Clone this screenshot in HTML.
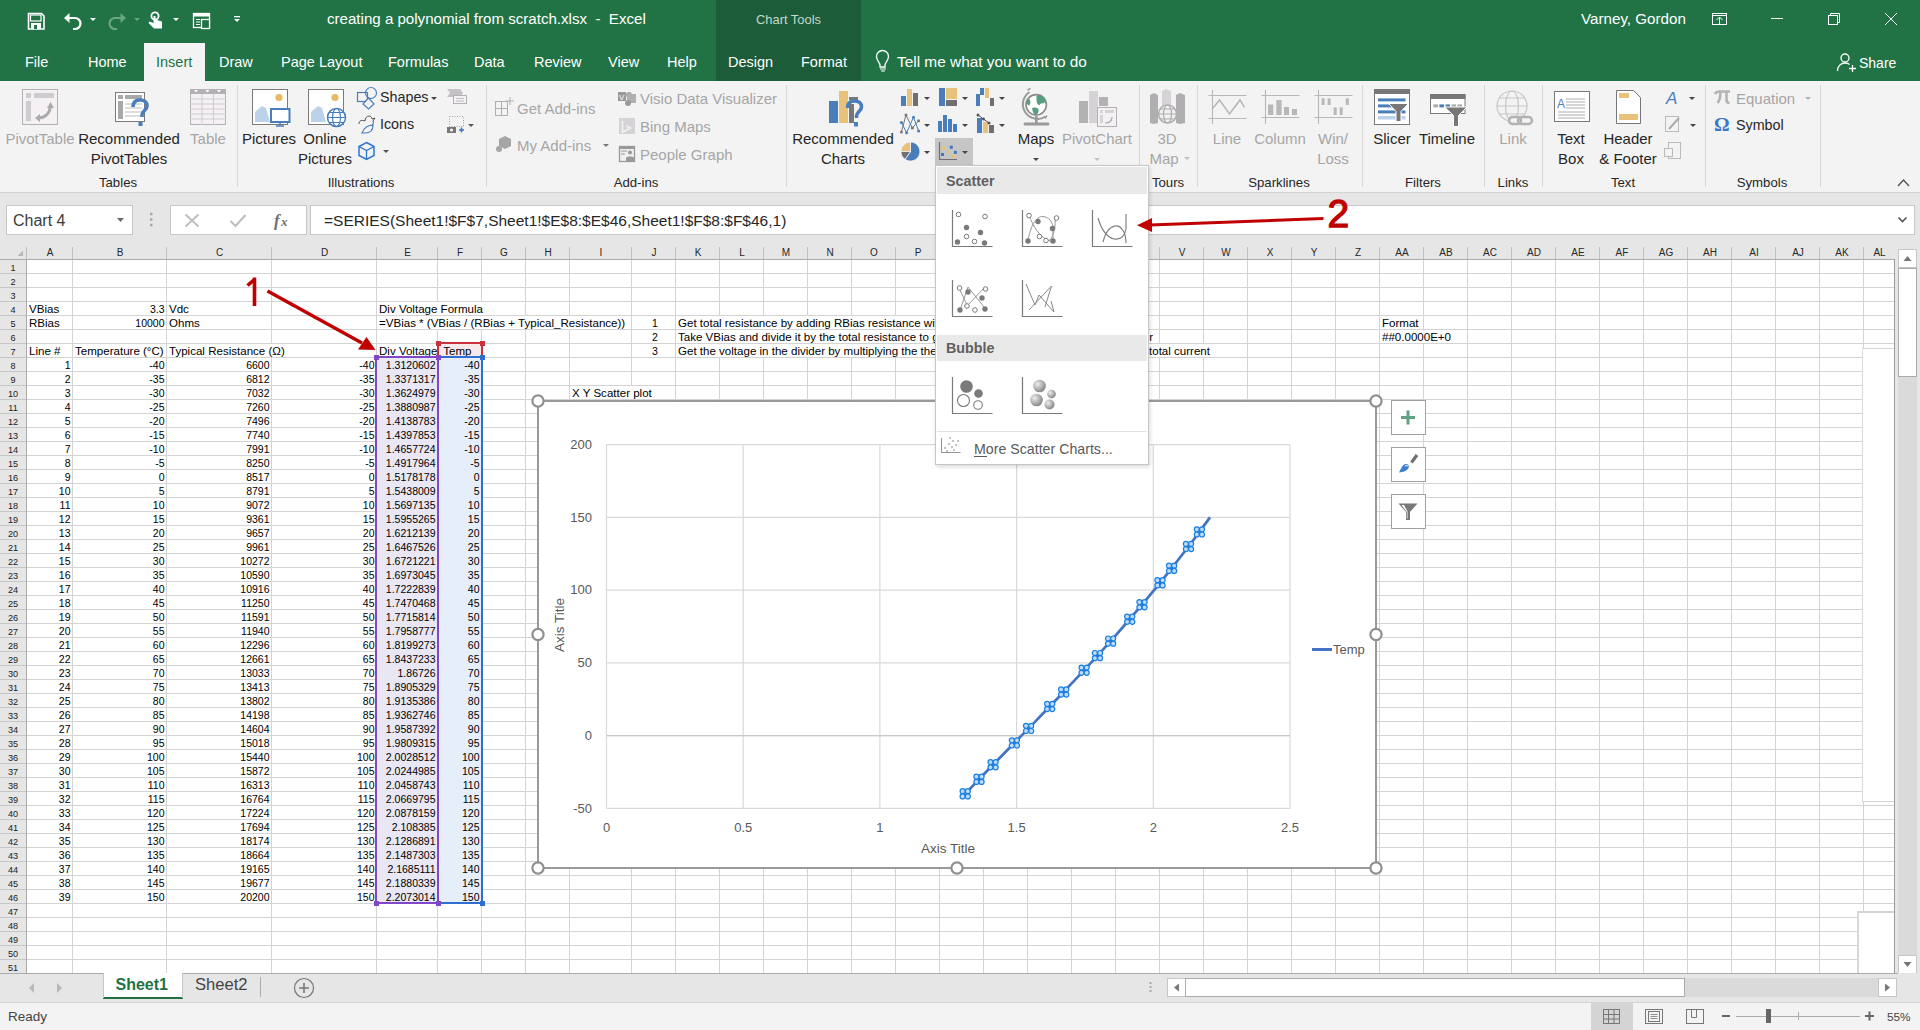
<!DOCTYPE html><html><head><meta charset="utf-8"><style>
*{margin:0;padding:0;box-sizing:border-box}
html,body{width:1920px;height:1030px;overflow:hidden;background:#fff;font-family:"Liberation Sans", sans-serif}
.a{position:absolute}
.t{position:absolute;white-space:nowrap;line-height:1}
.rb{color:#262626;font-size:14.5px}
.dis{color:#a6a6a6}
.gl{color:#262626;font-size:13px}
.cell{position:absolute;white-space:nowrap;font-size:11.55px;line-height:14px;color:#000;padding-top:1px}
.num{font-size:10.5px}
.tab{position:absolute;top:53px;color:#fff;font-size:14.5px;line-height:18px;white-space:nowrap}
</style></head><body>

<div class="a" style="left:0;top:0;width:1920px;height:81px;background:#217346"></div>
<div class="a" style="left:716px;top:0;width:145px;height:81px;background:#1c5c38"></div>
<div class="a" style="left:144px;top:43px;width:61px;height:39px;background:#f3f3f3"></div>
<div class="t" style="left:327px;top:11px;color:#fff;font-size:15.1px">creating a polynomial from scratch.xlsx&nbsp; -&nbsp; Excel</div>
<div class="t" style="left:756px;top:14px;color:#c5d9cc;font-size:12.9px">Chart Tools</div>
<div class="t" style="left:1581px;top:11px;color:#fff;font-size:15.2px">Varney, Gordon</div>
<div class="tab" style="left:25px;color:#fff">File</div>
<div class="tab" style="left:88px;color:#fff">Home</div>
<div class="tab" style="left:156px;color:#217346">Insert</div>
<div class="tab" style="left:219px;color:#fff">Draw</div>
<div class="tab" style="left:281px;color:#fff">Page Layout</div>
<div class="tab" style="left:388px;color:#fff">Formulas</div>
<div class="tab" style="left:474px;color:#fff">Data</div>
<div class="tab" style="left:534px;color:#fff">Review</div>
<div class="tab" style="left:608px;color:#fff">View</div>
<div class="tab" style="left:667px;color:#fff">Help</div>
<div class="tab" style="left:728px;color:#fff">Design</div>
<div class="tab" style="left:801px;color:#fff">Format</div>
<div class="tab" style="left:897px;font-size:15.4px">Tell me what you want to do</div>
<div class="tab" style="left:1859px;top:54px;font-size:14px">Share</div>
<div class="a" style="left:0;top:81px;width:1920px;height:112px;background:#f3f3f3;border-bottom:1px solid #d4d4d4"></div>
<svg class="a" style="left:0;top:0" width="1920" height="195" font-family=""Liberation Sans", sans-serif"><path d="M28.5,13.5 h13 l2.5,2.5 v13 h-15.5 z" fill="none" stroke="#fff" stroke-width="1.6"/><rect x="30.5" y="15" width="10.5" height="6" fill="#217346" stroke="#fff" stroke-width="1.2"/><rect x="31" y="23" width="10" height="6" fill="#fff"/><rect x="34" y="25" width="3" height="4" fill="#217346"/><path d="M66,18 h9 a5.5,5.5 0 0 1 0,11 h-2" fill="none" stroke="#fff" stroke-width="2.2"/><polygon points="64,18 69.5,13 69.5,23" fill="#fff"/><polygon points="90,18 96,18 93.0,21" fill="#fff"/><path d="M124,18 h-9 a5.5,5.5 0 0 0 0,11 h2" fill="none" stroke="#6aa584" stroke-width="2.2"/><polygon points="126,18 120.5,13 120.5,23" fill="#6aa584"/><polygon points="134,18 140,18 137.0,21" fill="#6aa584"/><circle cx="155" cy="16" r="3.6" fill="none" stroke="#fff" stroke-width="1.8"/><path d="M153.5,16 v7 l-4,-1.5 l-1,1.5 l5.5,5.5 h8 v-7 l-6.5,-2 v-3.5 z" fill="#fff"/><polygon points="173,18 179,18 176.0,21" fill="#fff"/><rect x="193.5" y="13.5" width="16" height="14" fill="none" stroke="#fff" stroke-width="1.3"/><rect x="193.5" y="13.5" width="16" height="3" fill="#fff"/><path d="M196,19.5 h4 M196,22 h4 M196,24.5 h4" stroke="#fff" stroke-width="1"/><rect x="201.5" y="19.5" width="8" height="9" fill="#217346" stroke="#fff" stroke-width="1.3"/><rect x="234" y="16" width="6" height="1.3" fill="#fff"/><polygon points="234,19 240,19 237.0,22" fill="#fff"/><rect x="1712.5" y="13.5" width="14" height="11" fill="none" stroke="#fff" stroke-width="1"/><path d="M1712.5,15.5 h14 M1719.5,17 v7.5 M1716.5,20 l3,-3 l3,3" fill="none" stroke="#fff" stroke-width="1"/><rect x="1771" y="18" width="12" height="1" fill="#fff"/><rect x="1828.5" y="15.5" width="9" height="9" fill="none" stroke="#fff" stroke-width="1"/><path d="M1830.5,15.5 v-2 h9 v9 h-2" fill="none" stroke="#fff" stroke-width="1"/><path d="M1885,13 l12,12 M1897,13 l-12,12" stroke="#fff" stroke-width="1"/><path d="M880,67 v-2 c0,-2.5 -3.5,-4.5 -3.5,-8.5 a6,6 0 0 1 12,0 c0,4 -3.5,6 -3.5,8.5 v2 z" fill="none" stroke="#fff" stroke-width="1.3"/><path d="M880,69 h6 M881,71 h4" stroke="#fff" stroke-width="1.2"/><circle cx="1845" cy="58" r="4" fill="none" stroke="#fff" stroke-width="1.3"/><path d="M1837.5,71 c0,-5 3.5,-8 7.5,-8 c2,0 3.5,0.5 4.5,1.5" fill="none" stroke="#fff" stroke-width="1.3"/><path d="M1852.5,65 v7 M1849,68.5 h7" stroke="#fff" stroke-width="1.3"/><rect x="237" y="85" width="1" height="102" fill="#d6d6d6"/><rect x="486" y="85" width="1" height="102" fill="#d6d6d6"/><rect x="786" y="85" width="1" height="102" fill="#d6d6d6"/><rect x="1139" y="85" width="1" height="102" fill="#d6d6d6"/><rect x="1197" y="85" width="1" height="102" fill="#d6d6d6"/><rect x="1362" y="85" width="1" height="102" fill="#d6d6d6"/><rect x="1484" y="85" width="1" height="102" fill="#d6d6d6"/><rect x="1542" y="85" width="1" height="102" fill="#d6d6d6"/><rect x="1705" y="85" width="1" height="102" fill="#d6d6d6"/><rect x="1820" y="85" width="1" height="102" fill="#d6d6d6"/><text x="118" y="187" font-size="13.2" fill="#262626" text-anchor="middle" font-weight="normal" >Tables</text><text x="361" y="187" font-size="13.2" fill="#262626" text-anchor="middle" font-weight="normal" >Illustrations</text><text x="636" y="187" font-size="13.2" fill="#262626" text-anchor="middle" font-weight="normal" >Add-ins</text><text x="1168" y="187" font-size="13.2" fill="#262626" text-anchor="middle" font-weight="normal" >Tours</text><text x="1279" y="187" font-size="13.2" fill="#262626" text-anchor="middle" font-weight="normal" >Sparklines</text><text x="1423" y="187" font-size="13.2" fill="#262626" text-anchor="middle" font-weight="normal" >Filters</text><text x="1513" y="187" font-size="13.2" fill="#262626" text-anchor="middle" font-weight="normal" >Links</text><text x="1623" y="187" font-size="13.2" fill="#262626" text-anchor="middle" font-weight="normal" >Text</text><text x="1762" y="187" font-size="13.2" fill="#262626" text-anchor="middle" font-weight="normal" >Symbols</text><path d="M1898,186 l5.5,-6 l5.5,6" fill="none" stroke="#555" stroke-width="1.4"/><rect x="22.5" y="89.5" width="35" height="35" fill="#f4f0f4" stroke="#b4b1b4" stroke-width="1"/><rect x="26" y="93" width="5" height="5" fill="#cfcccf"/><rect x="34" y="93" width="20" height="5" fill="#cfcccf"/><rect x="26" y="101" width="5" height="20" fill="#cfcccf"/><path d="M38,118 c6,0 12,-4 12,-11" fill="none" stroke="#aaa" stroke-width="3"/><polygon points="47,108 50.5,102 54,108" fill="#aaa"/><polygon points="40,114 35,118 40,122" fill="#aaa"/><text x="40" y="144" font-size="15" fill="#a6a6a6" text-anchor="middle" font-weight="normal" >PivotTable</text><rect x="115.5" y="92.5" width="29" height="29" fill="#fff" stroke="#7a7a7a" stroke-width="1"/><rect x="118" y="95" width="5" height="4" fill="#a8a8a8"/><rect x="125" y="95" width="17" height="4" fill="#a8a8a8"/><rect x="118" y="101" width="5" height="18" fill="#a8a8a8"/><path d="M125,104 h17 M125,108 h17 M125,112 h17 M125,116 h17" stroke="#ddd" stroke-width="2"/><path d="M133,107 c0,-5 3,-7 7,-7 c4,0 7,2 7,6 c0,4 -5,5 -5,9 v2" fill="none" stroke="#4a7ebb" stroke-width="3.6"/><rect x="138.5" y="122" width="4" height="4" fill="#4a7ebb"/><text x="129" y="144" font-size="15" fill="#262626" text-anchor="middle" font-weight="normal" >Recommended</text><text x="129" y="164" font-size="15" fill="#262626" text-anchor="middle" font-weight="normal" >PivotTables</text><rect x="190.5" y="89.5" width="35" height="35" fill="#f4f0f4" stroke="#b4b1b4" stroke-width="1"/><rect x="190" y="89" width="36" height="5" fill="#b4b1b4"/><path d="M190,99 h36 M190,104 h36 M190,109 h36 M190,114 h36 M190,119 h36 M202,94 v31 M213.5,94 v31" stroke="#cfcccf" stroke-width="1"/><polygon points="194,90 198,90 196,92.5" fill="#fff"/><polygon points="205.5,90 209.5,90 207.5,92.5" fill="#fff"/><polygon points="217,90 221,90 219,92.5" fill="#fff"/><text x="208" y="144" font-size="15" fill="#a6a6a6" text-anchor="middle" font-weight="normal" >Table</text><rect x="252.5" y="89.5" width="35" height="35" fill="#fff" stroke="#7a7a7a" stroke-width="1"/><circle cx="279" cy="97.5" r="3.6" fill="#e8b964"/><polygon points="255,122 255,112 262,106 266,108 270,122" fill="#bcd2ea"/><rect x="271" y="109" width="18.5" height="13" fill="#fff" stroke="#4a7ebb" stroke-width="2"/><path d="M280,122 v3 M276,126 h8" stroke="#4a7ebb" stroke-width="1.5"/><text x="269" y="144" font-size="15" fill="#262626" text-anchor="middle" font-weight="normal" >Pictures</text><rect x="308.5" y="89.5" width="35" height="35" fill="#fff" stroke="#7a7a7a" stroke-width="1"/><circle cx="335" cy="97.5" r="3.6" fill="#e8b964"/><polygon points="311,122 311,112 318,106 322,108 326,122" fill="#bcd2ea"/><circle cx="336.5" cy="117.5" r="9" fill="#fff" stroke="#4a7ebb" stroke-width="1.5"/><ellipse cx="336.5" cy="117.5" rx="4" ry="9" fill="none" stroke="#4a7ebb" stroke-width="1.2"/><path d="M327.5,117.5 h18 M329,112.5 h15 M329,122.5 h15" stroke="#4a7ebb" stroke-width="1.2"/><text x="325" y="144" font-size="15" fill="#262626" text-anchor="middle" font-weight="normal" >Online</text><text x="325" y="164" font-size="15" fill="#262626" text-anchor="middle" font-weight="normal" >Pictures</text><rect x="357.5" y="92.5" width="10" height="9" fill="none" stroke="#4a7ebb" stroke-width="1.2"/><circle cx="371" cy="93" r="5.5" fill="none" stroke="#4a7ebb" stroke-width="1.2"/><polygon points="368.5,98 374,104 368.5,109 363,104" fill="#f3f3f3" stroke="#4a7ebb" stroke-width="1.2"/><text x="380" y="102" font-size="14.3" fill="#262626" text-anchor="start" font-weight="normal" >Shapes</text><polygon points="431,97 437,97 434.0,100" fill="#444"/><path d="M359,124 c0,-4 3,-4 6,-3 c0,-3 2,-5 4,-5 c2,0 3,2 3,3 l3,-1 l-2,3 c1,2 0,4 -2,5" fill="none" stroke="#555" stroke-width="1"/><path d="M362,133 c2,-5 6,-8 11,-8 c0,5 -3,8 -8,8 z" fill="none" stroke="#4a7ebb" stroke-width="1.2"/><text x="380" y="129" font-size="14.3" fill="#262626" text-anchor="start" font-weight="normal" >Icons</text><polygon points="366.5,142.5 374,146.5 374,155.5 366.5,159.5 359,155.5 359,146.5" fill="none" stroke="#2e75d0" stroke-width="1.5"/><path d="M359,146.5 l7.5,4 l7.5,-4 M366.5,150.5 v9" fill="none" stroke="#2e75d0" stroke-width="1.3"/><polygon points="383,150 389,150 386.0,153" fill="#555"/><polygon points="447,89 460,89 463,93 460,97 447,97 450,93" fill="#c5c2c5"/><rect x="453.5" y="95.5" width="13" height="8" fill="#f4f0f4" stroke="#b4b1b4"/><path d="M456,98.5 h8 M456,101 h8" stroke="#b4b1b4" stroke-width="0.8"/><rect x="449.5" y="116.5" width="14" height="10" fill="none" stroke="#888" stroke-width="0.8" stroke-dasharray="1,1.5"/><rect x="447" y="127" width="9" height="6" fill="#777"/><circle cx="451.5" cy="130" r="1.6" fill="#f3f3f3"/><path d="M459,130 h5 M461.5,127.5 v5" stroke="#2e75d0" stroke-width="1.5"/><polygon points="468,124 474,124 471.0,127" fill="#555"/><rect x="495.5" y="101.5" width="12" height="14" fill="none" stroke="#b0b0b0" stroke-width="1"/><path d="M495.5,108.5 h12 M501.5,101.5 v14 M510,97 v8 M506,101 h8" stroke="#b0b0b0" stroke-width="1"/><text x="517" y="114" font-size="15" fill="#a6a6a6" text-anchor="start" font-weight="normal" >Get Add-ins</text><polygon points="505,136 511,139 511,146 505,149 499,146 499,139" fill="#a5a5a5"/><circle cx="499" cy="149" r="3" fill="#a5a5a5"/><text x="517" y="151" font-size="15" fill="#a6a6a6" text-anchor="start" font-weight="normal" >My Add-ins</text><polygon points="603,144 609,144 606.0,147" fill="#777"/><rect x="618" y="92" width="8" height="9" fill="#9a9a9a"/><circle cx="629" cy="95" r="3" fill="#a8a8a8"/><rect x="627" y="94" width="9" height="9" fill="#b0b0b0"/><circle cx="628" cy="103" r="3" fill="#9a9a9a"/><text x="619" y="100" font-size="8" fill="#fff">V</text><text x="640" y="104" font-size="15" fill="#a6a6a6" text-anchor="start" font-weight="normal" >Visio Data Visualizer</text><rect x="619" y="118" width="16" height="16" fill="#d6d3d6"/><path d="M622.5,121 v11 l8,-4 l-4,-2" fill="none" stroke="#f0f0f0" stroke-width="1.8"/><text x="640" y="132" font-size="15" fill="#a6a6a6" text-anchor="start" font-weight="normal" >Bing Maps</text><rect x="619.5" y="146.5" width="15" height="15" fill="#f0f0f0" stroke="#9a9a9a" stroke-width="1.3"/><rect x="619" y="146" width="16" height="3" fill="#9a9a9a"/><path d="M621,151 h6 M621,154 h4" stroke="#9a9a9a" stroke-width="1.2"/><circle cx="630" cy="152.5" r="2" fill="#9a9a9a"/><path d="M626,162 v-4 c0,-2 8,-2 8,0 v4" fill="#9a9a9a"/><text x="640" y="160" font-size="15" fill="#a6a6a6" text-anchor="start" font-weight="normal" >People Graph</text><rect x="829" y="101" width="9" height="22" fill="#4a7ebb"/><rect x="839" y="91" width="9" height="32" fill="#e8c27a"/><rect x="849" y="97" width="9" height="3" fill="#777"/><rect x="849" y="104" width="5" height="19" fill="#777"/><path d="M847.5,108 c0,-5 3,-7 7,-7 c4,0 7,2 7,6 c0,4 -5,5 -5,9 v2" fill="none" stroke="#4a7ebb" stroke-width="3.6"/><rect x="854" y="122" width="4" height="4.5" fill="#4a7ebb"/><text x="843" y="144" font-size="15" fill="#262626" text-anchor="middle" font-weight="normal" >Recommended</text><text x="843" y="164" font-size="15" fill="#262626" text-anchor="middle" font-weight="normal" >Charts</text><rect x="901" y="96" width="5" height="10" fill="#4a7ebb"/><rect x="907" y="89" width="5" height="17" fill="#e8c27a"/><rect x="913" y="93" width="5" height="13" fill="#6f6f6f"/><polygon points="924,97 930,97 927.0,100" fill="#444"/><rect x="939" y="88" width="6" height="18" fill="#4a7ebb"/><rect x="946" y="88" width="11" height="11" fill="#e8c27a"/><rect x="946" y="100" width="11" height="6" fill="#6f6f6f"/><polygon points="962,97 968,97 965.0,100" fill="#444"/><rect x="976" y="94" width="4" height="12" fill="#4a7ebb"/><rect x="980" y="88" width="4" height="7" fill="#4a7ebb"/><rect x="985" y="88" width="4" height="10" fill="#e8c27a"/><rect x="990" y="98" width="4" height="8" fill="#6f6f6f"/><polygon points="999,97 1005,97 1002.0,100" fill="#444"/><path d="M901.4,132 L906,115 L912.3,128 L918.6,120.7" fill="none" stroke="#777" stroke-width="1"/><path d="M901.4,122.4 L906.6,132.7 L913.5,117.2 L918.6,131" fill="none" stroke="#4a7ebb" stroke-width="1"/><circle cx="901.4" cy="132" r="1.5" fill="#777"/><circle cx="906" cy="115" r="1.5" fill="#777"/><circle cx="912.3" cy="128" r="1.5" fill="#777"/><circle cx="918.6" cy="120.7" r="1.5" fill="#777"/><circle cx="901.4" cy="122.4" r="1.5" fill="#4a7ebb"/><circle cx="906.6" cy="132.7" r="1.5" fill="#4a7ebb"/><circle cx="913.5" cy="117.2" r="1.5" fill="#4a7ebb"/><circle cx="918.6" cy="131" r="1.5" fill="#4a7ebb"/><polygon points="924,124 930,124 927.0,127" fill="#444"/><rect x="938" y="121" width="4" height="11" fill="#4a7ebb"/><rect x="943" y="115" width="4" height="17" fill="#4a7ebb"/><rect x="948" y="119" width="4" height="13" fill="#4a7ebb"/><rect x="953" y="124" width="4" height="8" fill="#4a7ebb"/><polygon points="962,124 968,124 965.0,127" fill="#444"/><rect x="977" y="118" width="5" height="15" fill="#4a7ebb"/><rect x="983" y="122" width="5" height="11" fill="#e8c27a"/><rect x="989" y="125" width="5" height="8" fill="#6f6f6f"/><path d="M978,115 l11,8" stroke="#555" stroke-width="1"/><circle cx="978" cy="115" r="1.5" fill="#555"/><circle cx="983.5" cy="119" r="1.5" fill="#555"/><circle cx="989" cy="123" r="1.5" fill="#555"/><polygon points="999,124 1005,124 1002.0,127" fill="#444"/><path d="M910.5,151.5 L910.5,142 A9.5,9.5 0 1 1 905,159.3 Z" fill="#4a7ebb" stroke="#f3f3f3" stroke-width="0.8"/><path d="M910.5,151.5 L901,151.5 A9.5,9.5 0 0 1 910.5,142 Z" fill="#e8c27a" stroke="#f3f3f3" stroke-width="0.8"/><path d="M910.5,151.5 L905,159.3 A9.5,9.5 0 0 1 901,151.5 Z" fill="#6f6f6f" stroke="#f3f3f3" stroke-width="0.8"/><polygon points="924,151 930,151 927.0,154" fill="#444"/><rect x="935" y="138" width="38" height="28" fill="#c6c6c6"/><path d="M939.5,142 v17.5 h17.5" fill="none" stroke="#6f6f6f" stroke-width="1.2"/><rect x="942.0" y="146.9" width="3" height="3" fill="#e8c27a"/><rect x="949.8" y="145.8" width="3" height="3" fill="#3f78c0"/><rect x="941.0" y="153.0" width="3" height="3" fill="#3f78c0"/><rect x="946.9" y="150.9" width="3" height="3" fill="#e8c27a"/><rect x="953.9" y="150.9" width="3" height="3" fill="#3f78c0"/><rect x="951.9" y="155.0" width="3" height="3" fill="#e8c27a"/><polygon points="962,151 968,151 965.0,154" fill="#444"/><path d="M1029.5,92 A13,13 0 0 0 1045.5,116.5" fill="none" stroke="#9a9a9a" stroke-width="2"/><path d="M1027.5,90 l3,-1.5 M1045,118.5 l2,-3" stroke="#9a9a9a" stroke-width="1.5"/><circle cx="1036.2" cy="104.8" r="10.2" fill="#fff" stroke="#8a8a8a" stroke-width="1.6"/><path d="M1036.5,96 c3,-1.5 6.5,-0.5 8.5,2.5 c0.5,2 0,4 -1.5,5 c-2,-0.5 -3.5,0.5 -4,2 c-2,-1 -3,-3 -3,-5 z M1026.5,102 c1,-2 2.5,-3 3.5,-2.5 c0.5,2 0.5,4 -0.5,6 c-1.5,0 -2.5,-1 -3,-3.5 z M1032,108 c2,-1 5,-0.5 6.5,1 c0.5,2.5 -0.5,5 -3,6.5 c-1.5,-1 -3,-3.5 -3.5,-7.5 z" fill="#5a9c80"/><rect x="1035" y="116" width="2.6" height="7" fill="#9a9a9a"/><rect x="1023.5" y="122.5" width="26" height="3" rx="1.5" fill="#9a9a9a"/><text x="1036" y="144" font-size="15" fill="#262626" text-anchor="middle" font-weight="normal" >Maps</text><polygon points="1033,158 1039,158 1036.0,161" fill="#444"/><rect x="1079" y="101" width="9" height="22" fill="#b4b1b4"/><rect x="1089" y="91" width="9" height="32" fill="#d6d3d6"/><rect x="1099" y="97" width="9" height="9" fill="#b4b1b4"/><rect x="1097.5" y="107.5" width="19" height="19" fill="#f4f0f4" stroke="#b4b1b4" stroke-width="1"/><rect x="1100" y="110" width="3" height="3" fill="#d6d3d6"/><rect x="1105" y="110" width="9" height="3" fill="#d6d3d6"/><rect x="1100" y="115" width="3" height="8" fill="#d6d3d6"/><path d="M1105,123 c4,0 7,-2 7,-6" fill="none" stroke="#aaa" stroke-width="1.2"/><text x="1097" y="144" font-size="15" fill="#a6a6a6" text-anchor="middle" font-weight="normal" >PivotChart</text><polygon points="1094,158 1100,158 1097.0,161" fill="#c0c0c0"/><path d="M1150,95 l4,-2 l4,2 v28 l-4,1 l-4,-1 z M1176,95 l4,-2 l5,2 v28 l-5,1 l-4,-1 z" fill="#b0aeb0"/><path d="M1162,91 l4,-2 l5,2 v22 h-9 z" fill="#d6d3d6"/><circle cx="1167.5" cy="114" r="9" fill="#f0f0f0" stroke="#b0aeb0" stroke-width="1.5"/><ellipse cx="1167.5" cy="114" rx="4" ry="9" fill="none" stroke="#b0aeb0" stroke-width="1.2"/><path d="M1158.5,114 h18 M1160,109 h15 M1160,119 h15" stroke="#b0aeb0" stroke-width="1.2"/><text x="1167" y="144" font-size="15" fill="#a6a6a6" text-anchor="middle" font-weight="normal" >3D</text><text x="1164" y="164" font-size="15" fill="#a6a6a6" text-anchor="middle" font-weight="normal" >Map</text><polygon points="1184,157 1190,157 1187.0,160" fill="#c0c0c0"/><path d="M1212.5,90 v34 M1208.5,95.5 h38 M1208.5,118.5 h38" stroke="#b9b7b9" stroke-width="1.1" fill="none"/><path d="M1212,109 L1219.6,100 L1229.5,114 L1240,100 L1244.6,107.4" fill="none" stroke="#b9b7b9" stroke-width="1.6"/><text x="1227" y="144" font-size="15" fill="#a6a6a6" text-anchor="middle" font-weight="normal" >Line</text><path d="M1265.5,90 v34 M1261.5,95.5 h38 M1261.5,117.5 h38" stroke="#b9b7b9" stroke-width="1.1" fill="none"/><rect x="1268" y="104.5" width="5.3" height="10.5" fill="#b9b7b9"/><rect x="1276.3" y="100" width="5.3" height="15" fill="#b9b7b9"/><rect x="1284" y="107" width="5" height="8" fill="#b9b7b9"/><rect x="1292" y="109" width="5" height="6" fill="#b9b7b9"/><text x="1280" y="144" font-size="15" fill="#a6a6a6" text-anchor="middle" font-weight="normal" >Column</text><path d="M1318.5,90 v34 M1314.5,95.5 h38 M1314.5,117.5 h38" stroke="#b9b7b9" stroke-width="1.1" fill="none"/><rect x="1321.6" y="98.3" width="3" height="6.7" fill="#b9b7b9"/><rect x="1327.6" y="98.3" width="3" height="6.7" fill="#b9b7b9"/><rect x="1345.8" y="98.3" width="3" height="6.7" fill="#b9b7b9"/><rect x="1333.7" y="107.4" width="3" height="7.6" fill="#b9b7b9"/><rect x="1339.7" y="107.4" width="3" height="7.6" fill="#b9b7b9"/><text x="1333" y="144" font-size="15" fill="#a6a6a6" text-anchor="middle" font-weight="normal" >Win/</text><text x="1333" y="164" font-size="15" fill="#a6a6a6" text-anchor="middle" font-weight="normal" >Loss</text><rect x="1374.5" y="89.5" width="35" height="35" fill="#fff" stroke="#777" stroke-width="1"/><rect x="1374" y="89" width="36" height="5" fill="#777"/><rect x="1378" y="98.4" width="27.5" height="3" fill="#4a7ebb"/><rect x="1378" y="104.4" width="27.5" height="3" fill="#4a7ebb"/><rect x="1378" y="110.4" width="27.5" height="3" fill="#4a7ebb"/><rect x="1378" y="116" width="27.5" height="3.5" fill="#bcd2ea"/><path d="M1388.5,103.5 h20 l-7.5,8 v10 h-5 v-10 z" fill="#777" stroke="#fff" stroke-width="1"/><text x="1392" y="144" font-size="15" fill="#262626" text-anchor="middle" font-weight="normal" >Slicer</text><rect x="1430.5" y="94.5" width="34.5" height="19" fill="#fff" stroke="#777" stroke-width="1"/><rect x="1430" y="94.5" width="35.5" height="4.5" fill="#777"/><rect x="1433.4" y="104.4" width="4.6" height="3" fill="#aaa"/><rect x="1439.4" y="104.4" width="4.6" height="3" fill="#4a7ebb"/><rect x="1445.5" y="104.4" width="4.5" height="3" fill="#4a7ebb"/><rect x="1451.5" y="104.4" width="4.5" height="3" fill="#aaa"/><rect x="1457.5" y="104.4" width="4.5" height="3" fill="#aaa"/><path d="M1444.5,107 h22.5 l-8.5,8.5 v11 h-5 v-11 z" fill="#777" stroke="#fff" stroke-width="1"/><text x="1447" y="144" font-size="15" fill="#262626" text-anchor="middle" font-weight="normal" >Timeline</text><circle cx="1512" cy="106" r="15" fill="none" stroke="#c9c6c9" stroke-width="1.2"/><ellipse cx="1512" cy="106" rx="6.5" ry="15" fill="none" stroke="#c9c6c9" stroke-width="1.2"/><path d="M1497,106 h30 M1499,98 h26 M1499,114 h26" stroke="#c9c6c9" stroke-width="1.2"/><rect x="1509" y="117" width="12" height="7" rx="3.5" fill="#f3f3f3" stroke="#b4b1b4" stroke-width="2.5"/><rect x="1518" y="117" width="14" height="7" rx="3.5" fill="none" stroke="#b4b1b4" stroke-width="2.5"/><text x="1513" y="144" font-size="15" fill="#a6a6a6" text-anchor="middle" font-weight="normal" >Link</text><rect x="1554.5" y="91.5" width="35" height="30" fill="#fff" stroke="#777" stroke-width="1"/><text x="1557" y="108" font-size="12" fill="#4a7ebb" font-weight="normal">A</text><path d="M1566,99 h19 M1566,102 h19 M1566,105 h19 M1566,108 h19 M1558,112 h27 M1558,115 h27 M1558,118 h27" stroke="#999" stroke-width="0.8"/><text x="1571" y="144" font-size="15" fill="#262626" text-anchor="middle" font-weight="normal" >Text</text><text x="1571" y="164" font-size="15" fill="#262626" text-anchor="middle" font-weight="normal" >Box</text><path d="M1616.5,90.5 h17 l7,7 v26 h-24 z" fill="#fff" stroke="#777" stroke-width="1"/><rect x="1619" y="93" width="10" height="5" fill="#e8c27a"/><rect x="1619" y="114" width="19" height="6" fill="#e8c27a"/><text x="1628" y="144" font-size="15" fill="#262626" text-anchor="middle" font-weight="normal" >Header</text><text x="1628" y="164" font-size="15" fill="#262626" text-anchor="middle" font-weight="normal" >&amp; Footer</text><text x="1666" y="104" font-size="17" font-style="italic" fill="#4a7ebb">A</text><polygon points="1689,97 1695,97 1692.0,100" fill="#444"/><rect x="1665.5" y="116.5" width="13" height="15" fill="#f3f3f3" stroke="#bbb" stroke-width="1"/><path d="M1669,129 l10,-11" stroke="#aaa" stroke-width="2"/><polygon points="1690,124 1696,124 1693.0,127" fill="#444"/><rect x="1668.5" y="142.5" width="12" height="16" fill="#f3f3f3" stroke="#bbb" stroke-width="1"/><rect x="1664.5" y="148.5" width="8" height="8" fill="#f3f3f3" stroke="#bbb" stroke-width="1"/><path d="M1715,94 c1,-2 2.5,-2.5 5,-2.5 h10 M1720.5,92 c0,4 -0.5,8 -3,11 M1726.5,92 v8 c0,2 1,3 3,3" fill="none" stroke="#b4b4b4" stroke-width="2.6"/><text x="1736" y="104" font-size="15" fill="#a6a6a6" text-anchor="start" font-weight="normal" >Equation</text><polygon points="1805,97 1811,97 1808.0,100" fill="#b0b0b0"/><text x="1714" y="131" font-size="19.5" fill="#3a78c8" font-weight="bold" font-family="Liberation Serif">Ω</text><text x="1736" y="130" font-size="14.3" fill="#262626" text-anchor="start" font-weight="normal" >Symbol</text></svg>
<div class="a" style="left:0;top:193px;width:1920px;height:51px;background:#e6e6e6"></div>
<svg class="a" style="left:0;top:193px" width="1920" height="51" font-family=""Liberation Sans", sans-serif"><g transform="translate(0,-193)"><rect x="6.5" y="205.5" width="126" height="29" fill="#fff" stroke="#c6c6c6" stroke-width="1"/><text x="13" y="226" font-size="16" fill="#3b3b3b" text-anchor="start" font-weight="normal" >Chart 4</text><polygon points="117,218 124,218 120.5,222" fill="#6a6a6a"/><rect x="150" y="212.8" width="2.5" height="2.5" fill="#a8a8a8"/><rect x="150" y="218.3" width="2.5" height="2.5" fill="#a8a8a8"/><rect x="150" y="223.8" width="2.5" height="2.5" fill="#a8a8a8"/><rect x="170.5" y="205.5" width="136" height="29" fill="#fff" stroke="#c6c6c6" stroke-width="1"/><path d="M185.5,214.5 l13,12 M198.5,214.5 l-13,12" stroke="#bdbdbd" stroke-width="1.8"/><path d="M230.5,221 l5,5 l10,-11" fill="none" stroke="#bdbdbd" stroke-width="2"/><text x="274" y="226" font-size="17" fill="#707070" font-family="Liberation Serif" font-style="italic" font-weight="bold">f</text><text x="281" y="226" font-size="13" fill="#707070" font-family="Liberation Serif" font-style="italic" font-weight="bold">x</text><rect x="310.5" y="205.5" width="1604" height="29" fill="#fff" stroke="#c6c6c6" stroke-width="1"/><text x="324" y="226" font-size="15.5" fill="#262626" text-anchor="start" font-weight="normal" >=SERIES(Sheet1!$F$7,Sheet1!$E$8:$E$46,Sheet1!$F$8:$F$46,1)</text><path d="M1898.5,217.5 l4,4 l4,-4" fill="none" stroke="#555" stroke-width="1.6"/></g></svg>
<div class="a" style="left:0;top:244px;width:1898px;height:15px;background:#e6e6e6"></div>
<div class="a" style="left:0;top:244px;width:26px;height:729px;background:#e6e6e6"></div>
<div class="a" style="left:26px;top:259px;width:1868px;height:714px;background:#fff"></div>
<svg class="a" style="left:0;top:0" width="1920" height="1030" shape-rendering="crispEdges"><line x1="26" y1="273.5" x2="1894" y2="273.5" stroke="#d4d4d4" stroke-width="1"/><line x1="26" y1="287.5" x2="1894" y2="287.5" stroke="#d4d4d4" stroke-width="1"/><line x1="26" y1="301.5" x2="1894" y2="301.5" stroke="#d4d4d4" stroke-width="1"/><line x1="26" y1="315.5" x2="1894" y2="315.5" stroke="#d4d4d4" stroke-width="1"/><line x1="26" y1="329.5" x2="1894" y2="329.5" stroke="#d4d4d4" stroke-width="1"/><line x1="26" y1="343.5" x2="1894" y2="343.5" stroke="#d4d4d4" stroke-width="1"/><line x1="26" y1="357.5" x2="1894" y2="357.5" stroke="#d4d4d4" stroke-width="1"/><line x1="26" y1="371.5" x2="1894" y2="371.5" stroke="#d4d4d4" stroke-width="1"/><line x1="26" y1="385.5" x2="1894" y2="385.5" stroke="#d4d4d4" stroke-width="1"/><line x1="26" y1="399.5" x2="1894" y2="399.5" stroke="#d4d4d4" stroke-width="1"/><line x1="26" y1="413.5" x2="1894" y2="413.5" stroke="#d4d4d4" stroke-width="1"/><line x1="26" y1="427.5" x2="1894" y2="427.5" stroke="#d4d4d4" stroke-width="1"/><line x1="26" y1="441.5" x2="1894" y2="441.5" stroke="#d4d4d4" stroke-width="1"/><line x1="26" y1="455.5" x2="1894" y2="455.5" stroke="#d4d4d4" stroke-width="1"/><line x1="26" y1="469.5" x2="1894" y2="469.5" stroke="#d4d4d4" stroke-width="1"/><line x1="26" y1="483.5" x2="1894" y2="483.5" stroke="#d4d4d4" stroke-width="1"/><line x1="26" y1="497.5" x2="1894" y2="497.5" stroke="#d4d4d4" stroke-width="1"/><line x1="26" y1="511.5" x2="1894" y2="511.5" stroke="#d4d4d4" stroke-width="1"/><line x1="26" y1="525.5" x2="1894" y2="525.5" stroke="#d4d4d4" stroke-width="1"/><line x1="26" y1="539.5" x2="1894" y2="539.5" stroke="#d4d4d4" stroke-width="1"/><line x1="26" y1="553.5" x2="1894" y2="553.5" stroke="#d4d4d4" stroke-width="1"/><line x1="26" y1="567.5" x2="1894" y2="567.5" stroke="#d4d4d4" stroke-width="1"/><line x1="26" y1="581.5" x2="1894" y2="581.5" stroke="#d4d4d4" stroke-width="1"/><line x1="26" y1="595.5" x2="1894" y2="595.5" stroke="#d4d4d4" stroke-width="1"/><line x1="26" y1="609.5" x2="1894" y2="609.5" stroke="#d4d4d4" stroke-width="1"/><line x1="26" y1="623.5" x2="1894" y2="623.5" stroke="#d4d4d4" stroke-width="1"/><line x1="26" y1="637.5" x2="1894" y2="637.5" stroke="#d4d4d4" stroke-width="1"/><line x1="26" y1="651.5" x2="1894" y2="651.5" stroke="#d4d4d4" stroke-width="1"/><line x1="26" y1="665.5" x2="1894" y2="665.5" stroke="#d4d4d4" stroke-width="1"/><line x1="26" y1="679.5" x2="1894" y2="679.5" stroke="#d4d4d4" stroke-width="1"/><line x1="26" y1="693.5" x2="1894" y2="693.5" stroke="#d4d4d4" stroke-width="1"/><line x1="26" y1="707.5" x2="1894" y2="707.5" stroke="#d4d4d4" stroke-width="1"/><line x1="26" y1="721.5" x2="1894" y2="721.5" stroke="#d4d4d4" stroke-width="1"/><line x1="26" y1="735.5" x2="1894" y2="735.5" stroke="#d4d4d4" stroke-width="1"/><line x1="26" y1="749.5" x2="1894" y2="749.5" stroke="#d4d4d4" stroke-width="1"/><line x1="26" y1="763.5" x2="1894" y2="763.5" stroke="#d4d4d4" stroke-width="1"/><line x1="26" y1="777.5" x2="1894" y2="777.5" stroke="#d4d4d4" stroke-width="1"/><line x1="26" y1="791.5" x2="1894" y2="791.5" stroke="#d4d4d4" stroke-width="1"/><line x1="26" y1="805.5" x2="1894" y2="805.5" stroke="#d4d4d4" stroke-width="1"/><line x1="26" y1="819.5" x2="1894" y2="819.5" stroke="#d4d4d4" stroke-width="1"/><line x1="26" y1="833.5" x2="1894" y2="833.5" stroke="#d4d4d4" stroke-width="1"/><line x1="26" y1="847.5" x2="1894" y2="847.5" stroke="#d4d4d4" stroke-width="1"/><line x1="26" y1="861.5" x2="1894" y2="861.5" stroke="#d4d4d4" stroke-width="1"/><line x1="26" y1="875.5" x2="1894" y2="875.5" stroke="#d4d4d4" stroke-width="1"/><line x1="26" y1="889.5" x2="1894" y2="889.5" stroke="#d4d4d4" stroke-width="1"/><line x1="26" y1="903.5" x2="1894" y2="903.5" stroke="#d4d4d4" stroke-width="1"/><line x1="26" y1="917.5" x2="1894" y2="917.5" stroke="#d4d4d4" stroke-width="1"/><line x1="26" y1="931.5" x2="1894" y2="931.5" stroke="#d4d4d4" stroke-width="1"/><line x1="26" y1="945.5" x2="1894" y2="945.5" stroke="#d4d4d4" stroke-width="1"/><line x1="26" y1="959.5" x2="1894" y2="959.5" stroke="#d4d4d4" stroke-width="1"/><line x1="26" y1="973.5" x2="1894" y2="973.5" stroke="#d4d4d4" stroke-width="1"/><line x1="72.5" y1="259" x2="72.5" y2="973" stroke="#d4d4d4" stroke-width="1"/><line x1="166.5" y1="259" x2="166.5" y2="973" stroke="#d4d4d4" stroke-width="1"/><line x1="271.5" y1="259" x2="271.5" y2="973" stroke="#d4d4d4" stroke-width="1"/><line x1="376.5" y1="259" x2="376.5" y2="973" stroke="#d4d4d4" stroke-width="1"/><line x1="437.5" y1="259" x2="437.5" y2="973" stroke="#d4d4d4" stroke-width="1"/><line x1="481.5" y1="259" x2="481.5" y2="973" stroke="#d4d4d4" stroke-width="1"/><line x1="525.5" y1="259" x2="525.5" y2="973" stroke="#d4d4d4" stroke-width="1"/><line x1="569.5" y1="259" x2="569.5" y2="973" stroke="#d4d4d4" stroke-width="1"/><line x1="631.5" y1="259" x2="631.5" y2="973" stroke="#d4d4d4" stroke-width="1"/><line x1="675.5" y1="259" x2="675.5" y2="973" stroke="#d4d4d4" stroke-width="1"/><line x1="719.5" y1="259" x2="719.5" y2="973" stroke="#d4d4d4" stroke-width="1"/><line x1="763.5" y1="259" x2="763.5" y2="973" stroke="#d4d4d4" stroke-width="1"/><line x1="807.5" y1="259" x2="807.5" y2="973" stroke="#d4d4d4" stroke-width="1"/><line x1="851.5" y1="259" x2="851.5" y2="973" stroke="#d4d4d4" stroke-width="1"/><line x1="895.5" y1="259" x2="895.5" y2="973" stroke="#d4d4d4" stroke-width="1"/><line x1="939.5" y1="259" x2="939.5" y2="973" stroke="#d4d4d4" stroke-width="1"/><line x1="983.5" y1="259" x2="983.5" y2="973" stroke="#d4d4d4" stroke-width="1"/><line x1="1027.5" y1="259" x2="1027.5" y2="973" stroke="#d4d4d4" stroke-width="1"/><line x1="1071.5" y1="259" x2="1071.5" y2="973" stroke="#d4d4d4" stroke-width="1"/><line x1="1115.5" y1="259" x2="1115.5" y2="973" stroke="#d4d4d4" stroke-width="1"/><line x1="1159.5" y1="259" x2="1159.5" y2="973" stroke="#d4d4d4" stroke-width="1"/><line x1="1203.5" y1="259" x2="1203.5" y2="973" stroke="#d4d4d4" stroke-width="1"/><line x1="1247.5" y1="259" x2="1247.5" y2="973" stroke="#d4d4d4" stroke-width="1"/><line x1="1291.5" y1="259" x2="1291.5" y2="973" stroke="#d4d4d4" stroke-width="1"/><line x1="1335.5" y1="259" x2="1335.5" y2="973" stroke="#d4d4d4" stroke-width="1"/><line x1="1379.5" y1="259" x2="1379.5" y2="973" stroke="#d4d4d4" stroke-width="1"/><line x1="1423.5" y1="259" x2="1423.5" y2="973" stroke="#d4d4d4" stroke-width="1"/><line x1="1467.5" y1="259" x2="1467.5" y2="973" stroke="#d4d4d4" stroke-width="1"/><line x1="1511.5" y1="259" x2="1511.5" y2="973" stroke="#d4d4d4" stroke-width="1"/><line x1="1555.5" y1="259" x2="1555.5" y2="973" stroke="#d4d4d4" stroke-width="1"/><line x1="1599.5" y1="259" x2="1599.5" y2="973" stroke="#d4d4d4" stroke-width="1"/><line x1="1643.5" y1="259" x2="1643.5" y2="973" stroke="#d4d4d4" stroke-width="1"/><line x1="1687.5" y1="259" x2="1687.5" y2="973" stroke="#d4d4d4" stroke-width="1"/><line x1="1731.5" y1="259" x2="1731.5" y2="973" stroke="#d4d4d4" stroke-width="1"/><line x1="1775.5" y1="259" x2="1775.5" y2="973" stroke="#d4d4d4" stroke-width="1"/><line x1="1819.5" y1="259" x2="1819.5" y2="973" stroke="#d4d4d4" stroke-width="1"/><line x1="1863.5" y1="259" x2="1863.5" y2="973" stroke="#d4d4d4" stroke-width="1"/><line x1="26.5" y1="247" x2="26.5" y2="259" stroke="#c0c0c0" stroke-width="1"/><line x1="72.5" y1="247" x2="72.5" y2="259" stroke="#c0c0c0" stroke-width="1"/><line x1="166.5" y1="247" x2="166.5" y2="259" stroke="#c0c0c0" stroke-width="1"/><line x1="271.5" y1="247" x2="271.5" y2="259" stroke="#c0c0c0" stroke-width="1"/><line x1="376.5" y1="247" x2="376.5" y2="259" stroke="#c0c0c0" stroke-width="1"/><line x1="437.5" y1="247" x2="437.5" y2="259" stroke="#c0c0c0" stroke-width="1"/><line x1="481.5" y1="247" x2="481.5" y2="259" stroke="#c0c0c0" stroke-width="1"/><line x1="525.5" y1="247" x2="525.5" y2="259" stroke="#c0c0c0" stroke-width="1"/><line x1="569.5" y1="247" x2="569.5" y2="259" stroke="#c0c0c0" stroke-width="1"/><line x1="631.5" y1="247" x2="631.5" y2="259" stroke="#c0c0c0" stroke-width="1"/><line x1="675.5" y1="247" x2="675.5" y2="259" stroke="#c0c0c0" stroke-width="1"/><line x1="719.5" y1="247" x2="719.5" y2="259" stroke="#c0c0c0" stroke-width="1"/><line x1="763.5" y1="247" x2="763.5" y2="259" stroke="#c0c0c0" stroke-width="1"/><line x1="807.5" y1="247" x2="807.5" y2="259" stroke="#c0c0c0" stroke-width="1"/><line x1="851.5" y1="247" x2="851.5" y2="259" stroke="#c0c0c0" stroke-width="1"/><line x1="895.5" y1="247" x2="895.5" y2="259" stroke="#c0c0c0" stroke-width="1"/><line x1="939.5" y1="247" x2="939.5" y2="259" stroke="#c0c0c0" stroke-width="1"/><line x1="983.5" y1="247" x2="983.5" y2="259" stroke="#c0c0c0" stroke-width="1"/><line x1="1027.5" y1="247" x2="1027.5" y2="259" stroke="#c0c0c0" stroke-width="1"/><line x1="1071.5" y1="247" x2="1071.5" y2="259" stroke="#c0c0c0" stroke-width="1"/><line x1="1115.5" y1="247" x2="1115.5" y2="259" stroke="#c0c0c0" stroke-width="1"/><line x1="1159.5" y1="247" x2="1159.5" y2="259" stroke="#c0c0c0" stroke-width="1"/><line x1="1203.5" y1="247" x2="1203.5" y2="259" stroke="#c0c0c0" stroke-width="1"/><line x1="1247.5" y1="247" x2="1247.5" y2="259" stroke="#c0c0c0" stroke-width="1"/><line x1="1291.5" y1="247" x2="1291.5" y2="259" stroke="#c0c0c0" stroke-width="1"/><line x1="1335.5" y1="247" x2="1335.5" y2="259" stroke="#c0c0c0" stroke-width="1"/><line x1="1379.5" y1="247" x2="1379.5" y2="259" stroke="#c0c0c0" stroke-width="1"/><line x1="1423.5" y1="247" x2="1423.5" y2="259" stroke="#c0c0c0" stroke-width="1"/><line x1="1467.5" y1="247" x2="1467.5" y2="259" stroke="#c0c0c0" stroke-width="1"/><line x1="1511.5" y1="247" x2="1511.5" y2="259" stroke="#c0c0c0" stroke-width="1"/><line x1="1555.5" y1="247" x2="1555.5" y2="259" stroke="#c0c0c0" stroke-width="1"/><line x1="1599.5" y1="247" x2="1599.5" y2="259" stroke="#c0c0c0" stroke-width="1"/><line x1="1643.5" y1="247" x2="1643.5" y2="259" stroke="#c0c0c0" stroke-width="1"/><line x1="1687.5" y1="247" x2="1687.5" y2="259" stroke="#c0c0c0" stroke-width="1"/><line x1="1731.5" y1="247" x2="1731.5" y2="259" stroke="#c0c0c0" stroke-width="1"/><line x1="1775.5" y1="247" x2="1775.5" y2="259" stroke="#c0c0c0" stroke-width="1"/><line x1="1819.5" y1="247" x2="1819.5" y2="259" stroke="#c0c0c0" stroke-width="1"/><line x1="1863.5" y1="247" x2="1863.5" y2="259" stroke="#c0c0c0" stroke-width="1"/><line x1="0" y1="259.5" x2="1894" y2="259.5" stroke="#ababab" stroke-width="1"/><line x1="26.5" y1="259" x2="26.5" y2="973" stroke="#ababab" stroke-width="1"/><line x1="0" y1="273.5" x2="26" y2="273.5" stroke="#c6c6c6" stroke-width="1"/><line x1="0" y1="287.5" x2="26" y2="287.5" stroke="#c6c6c6" stroke-width="1"/><line x1="0" y1="301.5" x2="26" y2="301.5" stroke="#c6c6c6" stroke-width="1"/><line x1="0" y1="315.5" x2="26" y2="315.5" stroke="#c6c6c6" stroke-width="1"/><line x1="0" y1="329.5" x2="26" y2="329.5" stroke="#c6c6c6" stroke-width="1"/><line x1="0" y1="343.5" x2="26" y2="343.5" stroke="#c6c6c6" stroke-width="1"/><line x1="0" y1="357.5" x2="26" y2="357.5" stroke="#c6c6c6" stroke-width="1"/><line x1="0" y1="371.5" x2="26" y2="371.5" stroke="#c6c6c6" stroke-width="1"/><line x1="0" y1="385.5" x2="26" y2="385.5" stroke="#c6c6c6" stroke-width="1"/><line x1="0" y1="399.5" x2="26" y2="399.5" stroke="#c6c6c6" stroke-width="1"/><line x1="0" y1="413.5" x2="26" y2="413.5" stroke="#c6c6c6" stroke-width="1"/><line x1="0" y1="427.5" x2="26" y2="427.5" stroke="#c6c6c6" stroke-width="1"/><line x1="0" y1="441.5" x2="26" y2="441.5" stroke="#c6c6c6" stroke-width="1"/><line x1="0" y1="455.5" x2="26" y2="455.5" stroke="#c6c6c6" stroke-width="1"/><line x1="0" y1="469.5" x2="26" y2="469.5" stroke="#c6c6c6" stroke-width="1"/><line x1="0" y1="483.5" x2="26" y2="483.5" stroke="#c6c6c6" stroke-width="1"/><line x1="0" y1="497.5" x2="26" y2="497.5" stroke="#c6c6c6" stroke-width="1"/><line x1="0" y1="511.5" x2="26" y2="511.5" stroke="#c6c6c6" stroke-width="1"/><line x1="0" y1="525.5" x2="26" y2="525.5" stroke="#c6c6c6" stroke-width="1"/><line x1="0" y1="539.5" x2="26" y2="539.5" stroke="#c6c6c6" stroke-width="1"/><line x1="0" y1="553.5" x2="26" y2="553.5" stroke="#c6c6c6" stroke-width="1"/><line x1="0" y1="567.5" x2="26" y2="567.5" stroke="#c6c6c6" stroke-width="1"/><line x1="0" y1="581.5" x2="26" y2="581.5" stroke="#c6c6c6" stroke-width="1"/><line x1="0" y1="595.5" x2="26" y2="595.5" stroke="#c6c6c6" stroke-width="1"/><line x1="0" y1="609.5" x2="26" y2="609.5" stroke="#c6c6c6" stroke-width="1"/><line x1="0" y1="623.5" x2="26" y2="623.5" stroke="#c6c6c6" stroke-width="1"/><line x1="0" y1="637.5" x2="26" y2="637.5" stroke="#c6c6c6" stroke-width="1"/><line x1="0" y1="651.5" x2="26" y2="651.5" stroke="#c6c6c6" stroke-width="1"/><line x1="0" y1="665.5" x2="26" y2="665.5" stroke="#c6c6c6" stroke-width="1"/><line x1="0" y1="679.5" x2="26" y2="679.5" stroke="#c6c6c6" stroke-width="1"/><line x1="0" y1="693.5" x2="26" y2="693.5" stroke="#c6c6c6" stroke-width="1"/><line x1="0" y1="707.5" x2="26" y2="707.5" stroke="#c6c6c6" stroke-width="1"/><line x1="0" y1="721.5" x2="26" y2="721.5" stroke="#c6c6c6" stroke-width="1"/><line x1="0" y1="735.5" x2="26" y2="735.5" stroke="#c6c6c6" stroke-width="1"/><line x1="0" y1="749.5" x2="26" y2="749.5" stroke="#c6c6c6" stroke-width="1"/><line x1="0" y1="763.5" x2="26" y2="763.5" stroke="#c6c6c6" stroke-width="1"/><line x1="0" y1="777.5" x2="26" y2="777.5" stroke="#c6c6c6" stroke-width="1"/><line x1="0" y1="791.5" x2="26" y2="791.5" stroke="#c6c6c6" stroke-width="1"/><line x1="0" y1="805.5" x2="26" y2="805.5" stroke="#c6c6c6" stroke-width="1"/><line x1="0" y1="819.5" x2="26" y2="819.5" stroke="#c6c6c6" stroke-width="1"/><line x1="0" y1="833.5" x2="26" y2="833.5" stroke="#c6c6c6" stroke-width="1"/><line x1="0" y1="847.5" x2="26" y2="847.5" stroke="#c6c6c6" stroke-width="1"/><line x1="0" y1="861.5" x2="26" y2="861.5" stroke="#c6c6c6" stroke-width="1"/><line x1="0" y1="875.5" x2="26" y2="875.5" stroke="#c6c6c6" stroke-width="1"/><line x1="0" y1="889.5" x2="26" y2="889.5" stroke="#c6c6c6" stroke-width="1"/><line x1="0" y1="903.5" x2="26" y2="903.5" stroke="#c6c6c6" stroke-width="1"/><line x1="0" y1="917.5" x2="26" y2="917.5" stroke="#c6c6c6" stroke-width="1"/><line x1="0" y1="931.5" x2="26" y2="931.5" stroke="#c6c6c6" stroke-width="1"/><line x1="0" y1="945.5" x2="26" y2="945.5" stroke="#c6c6c6" stroke-width="1"/><line x1="0" y1="959.5" x2="26" y2="959.5" stroke="#c6c6c6" stroke-width="1"/><line x1="0" y1="973.5" x2="26" y2="973.5" stroke="#c6c6c6" stroke-width="1"/><line x1="1894.5" y1="259" x2="1894.5" y2="973" stroke="#ababab" stroke-width="1"/><polygon points="23,256 23,250 17,256" fill="#b8b8b8"/></svg>
<div class="t" style="left:30.0px;width:40px;text-align:center;top:248px;font-size:10px;color:#262626">A</div>
<div class="t" style="left:100.0px;width:40px;text-align:center;top:248px;font-size:10px;color:#262626">B</div>
<div class="t" style="left:199.5px;width:40px;text-align:center;top:248px;font-size:10px;color:#262626">C</div>
<div class="t" style="left:304.5px;width:40px;text-align:center;top:248px;font-size:10px;color:#262626">D</div>
<div class="t" style="left:387.5px;width:40px;text-align:center;top:248px;font-size:10px;color:#262626">E</div>
<div class="t" style="left:440.0px;width:40px;text-align:center;top:248px;font-size:10px;color:#262626">F</div>
<div class="t" style="left:484.0px;width:40px;text-align:center;top:248px;font-size:10px;color:#262626">G</div>
<div class="t" style="left:528.0px;width:40px;text-align:center;top:248px;font-size:10px;color:#262626">H</div>
<div class="t" style="left:581.0px;width:40px;text-align:center;top:248px;font-size:10px;color:#262626">I</div>
<div class="t" style="left:634.0px;width:40px;text-align:center;top:248px;font-size:10px;color:#262626">J</div>
<div class="t" style="left:678.0px;width:40px;text-align:center;top:248px;font-size:10px;color:#262626">K</div>
<div class="t" style="left:722.0px;width:40px;text-align:center;top:248px;font-size:10px;color:#262626">L</div>
<div class="t" style="left:766.0px;width:40px;text-align:center;top:248px;font-size:10px;color:#262626">M</div>
<div class="t" style="left:810.0px;width:40px;text-align:center;top:248px;font-size:10px;color:#262626">N</div>
<div class="t" style="left:854.0px;width:40px;text-align:center;top:248px;font-size:10px;color:#262626">O</div>
<div class="t" style="left:898.0px;width:40px;text-align:center;top:248px;font-size:10px;color:#262626">P</div>
<div class="t" style="left:942.0px;width:40px;text-align:center;top:248px;font-size:10px;color:#262626">Q</div>
<div class="t" style="left:986.0px;width:40px;text-align:center;top:248px;font-size:10px;color:#262626">R</div>
<div class="t" style="left:1030.0px;width:40px;text-align:center;top:248px;font-size:10px;color:#262626">S</div>
<div class="t" style="left:1074.0px;width:40px;text-align:center;top:248px;font-size:10px;color:#262626">T</div>
<div class="t" style="left:1118.0px;width:40px;text-align:center;top:248px;font-size:10px;color:#262626">U</div>
<div class="t" style="left:1162.0px;width:40px;text-align:center;top:248px;font-size:10px;color:#262626">V</div>
<div class="t" style="left:1206.0px;width:40px;text-align:center;top:248px;font-size:10px;color:#262626">W</div>
<div class="t" style="left:1250.0px;width:40px;text-align:center;top:248px;font-size:10px;color:#262626">X</div>
<div class="t" style="left:1294.0px;width:40px;text-align:center;top:248px;font-size:10px;color:#262626">Y</div>
<div class="t" style="left:1338.0px;width:40px;text-align:center;top:248px;font-size:10px;color:#262626">Z</div>
<div class="t" style="left:1382.0px;width:40px;text-align:center;top:248px;font-size:10px;color:#262626">AA</div>
<div class="t" style="left:1426.0px;width:40px;text-align:center;top:248px;font-size:10px;color:#262626">AB</div>
<div class="t" style="left:1470.0px;width:40px;text-align:center;top:248px;font-size:10px;color:#262626">AC</div>
<div class="t" style="left:1514.0px;width:40px;text-align:center;top:248px;font-size:10px;color:#262626">AD</div>
<div class="t" style="left:1558.0px;width:40px;text-align:center;top:248px;font-size:10px;color:#262626">AE</div>
<div class="t" style="left:1602.0px;width:40px;text-align:center;top:248px;font-size:10px;color:#262626">AF</div>
<div class="t" style="left:1646.0px;width:40px;text-align:center;top:248px;font-size:10px;color:#262626">AG</div>
<div class="t" style="left:1690.0px;width:40px;text-align:center;top:248px;font-size:10px;color:#262626">AH</div>
<div class="t" style="left:1734.0px;width:40px;text-align:center;top:248px;font-size:10px;color:#262626">AI</div>
<div class="t" style="left:1778.0px;width:40px;text-align:center;top:248px;font-size:10px;color:#262626">AJ</div>
<div class="t" style="left:1822.0px;width:40px;text-align:center;top:248px;font-size:10px;color:#262626">AK</div>
<div class="t" style="left:1859.5px;width:40px;text-align:center;top:248px;font-size:10px;color:#262626">AL</div>
<div class="t" style="left:1px;width:24px;text-align:center;top:263px;font-size:9.6px;color:#1a1a1a;transform:scaleX(0.95)">1</div>
<div class="t" style="left:1px;width:24px;text-align:center;top:277px;font-size:9.6px;color:#1a1a1a;transform:scaleX(0.95)">2</div>
<div class="t" style="left:1px;width:24px;text-align:center;top:291px;font-size:9.6px;color:#1a1a1a;transform:scaleX(0.95)">3</div>
<div class="t" style="left:1px;width:24px;text-align:center;top:305px;font-size:9.6px;color:#1a1a1a;transform:scaleX(0.95)">4</div>
<div class="t" style="left:1px;width:24px;text-align:center;top:319px;font-size:9.6px;color:#1a1a1a;transform:scaleX(0.95)">5</div>
<div class="t" style="left:1px;width:24px;text-align:center;top:333px;font-size:9.6px;color:#1a1a1a;transform:scaleX(0.95)">6</div>
<div class="t" style="left:1px;width:24px;text-align:center;top:347px;font-size:9.6px;color:#1a1a1a;transform:scaleX(0.95)">7</div>
<div class="t" style="left:1px;width:24px;text-align:center;top:361px;font-size:9.6px;color:#1a1a1a;transform:scaleX(0.95)">8</div>
<div class="t" style="left:1px;width:24px;text-align:center;top:375px;font-size:9.6px;color:#1a1a1a;transform:scaleX(0.95)">9</div>
<div class="t" style="left:1px;width:24px;text-align:center;top:389px;font-size:9.6px;color:#1a1a1a;transform:scaleX(0.95)">10</div>
<div class="t" style="left:1px;width:24px;text-align:center;top:403px;font-size:9.6px;color:#1a1a1a;transform:scaleX(0.95)">11</div>
<div class="t" style="left:1px;width:24px;text-align:center;top:417px;font-size:9.6px;color:#1a1a1a;transform:scaleX(0.95)">12</div>
<div class="t" style="left:1px;width:24px;text-align:center;top:431px;font-size:9.6px;color:#1a1a1a;transform:scaleX(0.95)">13</div>
<div class="t" style="left:1px;width:24px;text-align:center;top:445px;font-size:9.6px;color:#1a1a1a;transform:scaleX(0.95)">14</div>
<div class="t" style="left:1px;width:24px;text-align:center;top:459px;font-size:9.6px;color:#1a1a1a;transform:scaleX(0.95)">15</div>
<div class="t" style="left:1px;width:24px;text-align:center;top:473px;font-size:9.6px;color:#1a1a1a;transform:scaleX(0.95)">16</div>
<div class="t" style="left:1px;width:24px;text-align:center;top:487px;font-size:9.6px;color:#1a1a1a;transform:scaleX(0.95)">17</div>
<div class="t" style="left:1px;width:24px;text-align:center;top:501px;font-size:9.6px;color:#1a1a1a;transform:scaleX(0.95)">18</div>
<div class="t" style="left:1px;width:24px;text-align:center;top:515px;font-size:9.6px;color:#1a1a1a;transform:scaleX(0.95)">19</div>
<div class="t" style="left:1px;width:24px;text-align:center;top:529px;font-size:9.6px;color:#1a1a1a;transform:scaleX(0.95)">20</div>
<div class="t" style="left:1px;width:24px;text-align:center;top:543px;font-size:9.6px;color:#1a1a1a;transform:scaleX(0.95)">21</div>
<div class="t" style="left:1px;width:24px;text-align:center;top:557px;font-size:9.6px;color:#1a1a1a;transform:scaleX(0.95)">22</div>
<div class="t" style="left:1px;width:24px;text-align:center;top:571px;font-size:9.6px;color:#1a1a1a;transform:scaleX(0.95)">23</div>
<div class="t" style="left:1px;width:24px;text-align:center;top:585px;font-size:9.6px;color:#1a1a1a;transform:scaleX(0.95)">24</div>
<div class="t" style="left:1px;width:24px;text-align:center;top:599px;font-size:9.6px;color:#1a1a1a;transform:scaleX(0.95)">25</div>
<div class="t" style="left:1px;width:24px;text-align:center;top:613px;font-size:9.6px;color:#1a1a1a;transform:scaleX(0.95)">26</div>
<div class="t" style="left:1px;width:24px;text-align:center;top:627px;font-size:9.6px;color:#1a1a1a;transform:scaleX(0.95)">27</div>
<div class="t" style="left:1px;width:24px;text-align:center;top:641px;font-size:9.6px;color:#1a1a1a;transform:scaleX(0.95)">28</div>
<div class="t" style="left:1px;width:24px;text-align:center;top:655px;font-size:9.6px;color:#1a1a1a;transform:scaleX(0.95)">29</div>
<div class="t" style="left:1px;width:24px;text-align:center;top:669px;font-size:9.6px;color:#1a1a1a;transform:scaleX(0.95)">30</div>
<div class="t" style="left:1px;width:24px;text-align:center;top:683px;font-size:9.6px;color:#1a1a1a;transform:scaleX(0.95)">31</div>
<div class="t" style="left:1px;width:24px;text-align:center;top:697px;font-size:9.6px;color:#1a1a1a;transform:scaleX(0.95)">32</div>
<div class="t" style="left:1px;width:24px;text-align:center;top:711px;font-size:9.6px;color:#1a1a1a;transform:scaleX(0.95)">33</div>
<div class="t" style="left:1px;width:24px;text-align:center;top:725px;font-size:9.6px;color:#1a1a1a;transform:scaleX(0.95)">34</div>
<div class="t" style="left:1px;width:24px;text-align:center;top:739px;font-size:9.6px;color:#1a1a1a;transform:scaleX(0.95)">35</div>
<div class="t" style="left:1px;width:24px;text-align:center;top:753px;font-size:9.6px;color:#1a1a1a;transform:scaleX(0.95)">36</div>
<div class="t" style="left:1px;width:24px;text-align:center;top:767px;font-size:9.6px;color:#1a1a1a;transform:scaleX(0.95)">37</div>
<div class="t" style="left:1px;width:24px;text-align:center;top:781px;font-size:9.6px;color:#1a1a1a;transform:scaleX(0.95)">38</div>
<div class="t" style="left:1px;width:24px;text-align:center;top:795px;font-size:9.6px;color:#1a1a1a;transform:scaleX(0.95)">39</div>
<div class="t" style="left:1px;width:24px;text-align:center;top:809px;font-size:9.6px;color:#1a1a1a;transform:scaleX(0.95)">40</div>
<div class="t" style="left:1px;width:24px;text-align:center;top:823px;font-size:9.6px;color:#1a1a1a;transform:scaleX(0.95)">41</div>
<div class="t" style="left:1px;width:24px;text-align:center;top:837px;font-size:9.6px;color:#1a1a1a;transform:scaleX(0.95)">42</div>
<div class="t" style="left:1px;width:24px;text-align:center;top:851px;font-size:9.6px;color:#1a1a1a;transform:scaleX(0.95)">43</div>
<div class="t" style="left:1px;width:24px;text-align:center;top:865px;font-size:9.6px;color:#1a1a1a;transform:scaleX(0.95)">44</div>
<div class="t" style="left:1px;width:24px;text-align:center;top:879px;font-size:9.6px;color:#1a1a1a;transform:scaleX(0.95)">45</div>
<div class="t" style="left:1px;width:24px;text-align:center;top:893px;font-size:9.6px;color:#1a1a1a;transform:scaleX(0.95)">46</div>
<div class="t" style="left:1px;width:24px;text-align:center;top:907px;font-size:9.6px;color:#1a1a1a;transform:scaleX(0.95)">47</div>
<div class="t" style="left:1px;width:24px;text-align:center;top:921px;font-size:9.6px;color:#1a1a1a;transform:scaleX(0.95)">48</div>
<div class="t" style="left:1px;width:24px;text-align:center;top:935px;font-size:9.6px;color:#1a1a1a;transform:scaleX(0.95)">49</div>
<div class="t" style="left:1px;width:24px;text-align:center;top:949px;font-size:9.6px;color:#1a1a1a;transform:scaleX(0.95)">50</div>
<div class="t" style="left:1px;width:24px;text-align:center;top:963px;font-size:9.6px;color:#1a1a1a;transform:scaleX(0.95)">51</div>
<div class="a" style="left:377px;top:357px;width:60px;height:546px;background:#e9e7f3"></div>
<div class="a" style="left:438px;top:357px;width:44px;height:546px;background:#e6eef9"></div>
<div class="a" style="left:438px;top:343px;width:44px;height:14px;background:#f7e9eb"></div>
<div class="a" style="left:377px;top:302px;width:148px;height:13px;background:#fff"></div>
<div class="a" style="left:377px;top:316px;width:254px;height:13px;background:#fff"></div>
<div class="a" style="left:167px;top:344px;width:209px;height:13px;background:#fff"></div>
<div class="a" style="left:570px;top:386px;width:105px;height:13px;background:#fff"></div>
<div class="a" style="left:1380px;top:330px;width:87px;height:13px;background:#fff"></div>
<div class="a" style="left:676px;top:316px;width:472px;height:13px;background:#fff"></div>
<div class="a" style="left:676px;top:330px;width:483px;height:13px;background:#fff"></div>
<div class="a" style="left:676px;top:344px;width:571px;height:13px;background:#fff"></div>
<div class="cell" style="left:29px;top:301px">VBias</div>
<div class="cell num" style="left:72px;width:92.5px;text-align:right;top:301px">3.3</div>
<div class="cell" style="left:169px;top:301px">Vdc</div>
<div class="cell" style="left:29px;top:315px">RBias</div>
<div class="cell num" style="left:72px;width:92.5px;text-align:right;top:315px">10000</div>
<div class="cell" style="left:169px;top:315px">Ohms</div>
<div class="cell" style="left:29px;top:343px">Line #</div>
<div class="cell" style="left:75px;top:343px">Temperature (°C)</div>
<div class="cell" style="left:169px;top:343px">Typical Resistance (Ω)</div>
<div class="cell" style="left:379px;top:301px">Div Voltage Formula</div>
<div class="cell" style="left:379px;top:315px">=VBias * (VBias / (RBias + Typical_Resistance))</div>
<div class="cell" style="left:379px;top:343px">Div Voltage</div>
<div class="cell" style="left:440px;top:343px">&nbsp;Temp</div>
<div class="cell num" style="left:26px;width:44.5px;text-align:right;top:357px">1</div>
<div class="cell num" style="left:72px;width:92.5px;text-align:right;top:357px">-40</div>
<div class="cell num" style="left:166px;width:103.5px;text-align:right;top:357px">6600</div>
<div class="cell num" style="left:271px;width:103.5px;text-align:right;top:357px">-40</div>
<div class="cell num" style="left:376px;width:59.5px;text-align:right;top:357px">1.3120602</div>
<div class="cell num" style="left:437px;width:42.5px;text-align:right;top:357px">-40</div>
<div class="cell num" style="left:26px;width:44.5px;text-align:right;top:371px">2</div>
<div class="cell num" style="left:72px;width:92.5px;text-align:right;top:371px">-35</div>
<div class="cell num" style="left:166px;width:103.5px;text-align:right;top:371px">6812</div>
<div class="cell num" style="left:271px;width:103.5px;text-align:right;top:371px">-35</div>
<div class="cell num" style="left:376px;width:59.5px;text-align:right;top:371px">1.3371317</div>
<div class="cell num" style="left:437px;width:42.5px;text-align:right;top:371px">-35</div>
<div class="cell num" style="left:26px;width:44.5px;text-align:right;top:385px">3</div>
<div class="cell num" style="left:72px;width:92.5px;text-align:right;top:385px">-30</div>
<div class="cell num" style="left:166px;width:103.5px;text-align:right;top:385px">7032</div>
<div class="cell num" style="left:271px;width:103.5px;text-align:right;top:385px">-30</div>
<div class="cell num" style="left:376px;width:59.5px;text-align:right;top:385px">1.3624979</div>
<div class="cell num" style="left:437px;width:42.5px;text-align:right;top:385px">-30</div>
<div class="cell num" style="left:26px;width:44.5px;text-align:right;top:399px">4</div>
<div class="cell num" style="left:72px;width:92.5px;text-align:right;top:399px">-25</div>
<div class="cell num" style="left:166px;width:103.5px;text-align:right;top:399px">7260</div>
<div class="cell num" style="left:271px;width:103.5px;text-align:right;top:399px">-25</div>
<div class="cell num" style="left:376px;width:59.5px;text-align:right;top:399px">1.3880987</div>
<div class="cell num" style="left:437px;width:42.5px;text-align:right;top:399px">-25</div>
<div class="cell num" style="left:26px;width:44.5px;text-align:right;top:413px">5</div>
<div class="cell num" style="left:72px;width:92.5px;text-align:right;top:413px">-20</div>
<div class="cell num" style="left:166px;width:103.5px;text-align:right;top:413px">7496</div>
<div class="cell num" style="left:271px;width:103.5px;text-align:right;top:413px">-20</div>
<div class="cell num" style="left:376px;width:59.5px;text-align:right;top:413px">1.4138783</div>
<div class="cell num" style="left:437px;width:42.5px;text-align:right;top:413px">-20</div>
<div class="cell num" style="left:26px;width:44.5px;text-align:right;top:427px">6</div>
<div class="cell num" style="left:72px;width:92.5px;text-align:right;top:427px">-15</div>
<div class="cell num" style="left:166px;width:103.5px;text-align:right;top:427px">7740</div>
<div class="cell num" style="left:271px;width:103.5px;text-align:right;top:427px">-15</div>
<div class="cell num" style="left:376px;width:59.5px;text-align:right;top:427px">1.4397853</div>
<div class="cell num" style="left:437px;width:42.5px;text-align:right;top:427px">-15</div>
<div class="cell num" style="left:26px;width:44.5px;text-align:right;top:441px">7</div>
<div class="cell num" style="left:72px;width:92.5px;text-align:right;top:441px">-10</div>
<div class="cell num" style="left:166px;width:103.5px;text-align:right;top:441px">7991</div>
<div class="cell num" style="left:271px;width:103.5px;text-align:right;top:441px">-10</div>
<div class="cell num" style="left:376px;width:59.5px;text-align:right;top:441px">1.4657724</div>
<div class="cell num" style="left:437px;width:42.5px;text-align:right;top:441px">-10</div>
<div class="cell num" style="left:26px;width:44.5px;text-align:right;top:455px">8</div>
<div class="cell num" style="left:72px;width:92.5px;text-align:right;top:455px">-5</div>
<div class="cell num" style="left:166px;width:103.5px;text-align:right;top:455px">8250</div>
<div class="cell num" style="left:271px;width:103.5px;text-align:right;top:455px">-5</div>
<div class="cell num" style="left:376px;width:59.5px;text-align:right;top:455px">1.4917964</div>
<div class="cell num" style="left:437px;width:42.5px;text-align:right;top:455px">-5</div>
<div class="cell num" style="left:26px;width:44.5px;text-align:right;top:469px">9</div>
<div class="cell num" style="left:72px;width:92.5px;text-align:right;top:469px">0</div>
<div class="cell num" style="left:166px;width:103.5px;text-align:right;top:469px">8517</div>
<div class="cell num" style="left:271px;width:103.5px;text-align:right;top:469px">0</div>
<div class="cell num" style="left:376px;width:59.5px;text-align:right;top:469px">1.5178178</div>
<div class="cell num" style="left:437px;width:42.5px;text-align:right;top:469px">0</div>
<div class="cell num" style="left:26px;width:44.5px;text-align:right;top:483px">10</div>
<div class="cell num" style="left:72px;width:92.5px;text-align:right;top:483px">5</div>
<div class="cell num" style="left:166px;width:103.5px;text-align:right;top:483px">8791</div>
<div class="cell num" style="left:271px;width:103.5px;text-align:right;top:483px">5</div>
<div class="cell num" style="left:376px;width:59.5px;text-align:right;top:483px">1.5438009</div>
<div class="cell num" style="left:437px;width:42.5px;text-align:right;top:483px">5</div>
<div class="cell num" style="left:26px;width:44.5px;text-align:right;top:497px">11</div>
<div class="cell num" style="left:72px;width:92.5px;text-align:right;top:497px">10</div>
<div class="cell num" style="left:166px;width:103.5px;text-align:right;top:497px">9072</div>
<div class="cell num" style="left:271px;width:103.5px;text-align:right;top:497px">10</div>
<div class="cell num" style="left:376px;width:59.5px;text-align:right;top:497px">1.5697135</div>
<div class="cell num" style="left:437px;width:42.5px;text-align:right;top:497px">10</div>
<div class="cell num" style="left:26px;width:44.5px;text-align:right;top:511px">12</div>
<div class="cell num" style="left:72px;width:92.5px;text-align:right;top:511px">15</div>
<div class="cell num" style="left:166px;width:103.5px;text-align:right;top:511px">9361</div>
<div class="cell num" style="left:271px;width:103.5px;text-align:right;top:511px">15</div>
<div class="cell num" style="left:376px;width:59.5px;text-align:right;top:511px">1.5955265</div>
<div class="cell num" style="left:437px;width:42.5px;text-align:right;top:511px">15</div>
<div class="cell num" style="left:26px;width:44.5px;text-align:right;top:525px">13</div>
<div class="cell num" style="left:72px;width:92.5px;text-align:right;top:525px">20</div>
<div class="cell num" style="left:166px;width:103.5px;text-align:right;top:525px">9657</div>
<div class="cell num" style="left:271px;width:103.5px;text-align:right;top:525px">20</div>
<div class="cell num" style="left:376px;width:59.5px;text-align:right;top:525px">1.6212139</div>
<div class="cell num" style="left:437px;width:42.5px;text-align:right;top:525px">20</div>
<div class="cell num" style="left:26px;width:44.5px;text-align:right;top:539px">14</div>
<div class="cell num" style="left:72px;width:92.5px;text-align:right;top:539px">25</div>
<div class="cell num" style="left:166px;width:103.5px;text-align:right;top:539px">9961</div>
<div class="cell num" style="left:271px;width:103.5px;text-align:right;top:539px">25</div>
<div class="cell num" style="left:376px;width:59.5px;text-align:right;top:539px">1.6467526</div>
<div class="cell num" style="left:437px;width:42.5px;text-align:right;top:539px">25</div>
<div class="cell num" style="left:26px;width:44.5px;text-align:right;top:553px">15</div>
<div class="cell num" style="left:72px;width:92.5px;text-align:right;top:553px">30</div>
<div class="cell num" style="left:166px;width:103.5px;text-align:right;top:553px">10272</div>
<div class="cell num" style="left:271px;width:103.5px;text-align:right;top:553px">30</div>
<div class="cell num" style="left:376px;width:59.5px;text-align:right;top:553px">1.6721221</div>
<div class="cell num" style="left:437px;width:42.5px;text-align:right;top:553px">30</div>
<div class="cell num" style="left:26px;width:44.5px;text-align:right;top:567px">16</div>
<div class="cell num" style="left:72px;width:92.5px;text-align:right;top:567px">35</div>
<div class="cell num" style="left:166px;width:103.5px;text-align:right;top:567px">10590</div>
<div class="cell num" style="left:271px;width:103.5px;text-align:right;top:567px">35</div>
<div class="cell num" style="left:376px;width:59.5px;text-align:right;top:567px">1.6973045</div>
<div class="cell num" style="left:437px;width:42.5px;text-align:right;top:567px">35</div>
<div class="cell num" style="left:26px;width:44.5px;text-align:right;top:581px">17</div>
<div class="cell num" style="left:72px;width:92.5px;text-align:right;top:581px">40</div>
<div class="cell num" style="left:166px;width:103.5px;text-align:right;top:581px">10916</div>
<div class="cell num" style="left:271px;width:103.5px;text-align:right;top:581px">40</div>
<div class="cell num" style="left:376px;width:59.5px;text-align:right;top:581px">1.7222839</div>
<div class="cell num" style="left:437px;width:42.5px;text-align:right;top:581px">40</div>
<div class="cell num" style="left:26px;width:44.5px;text-align:right;top:595px">18</div>
<div class="cell num" style="left:72px;width:92.5px;text-align:right;top:595px">45</div>
<div class="cell num" style="left:166px;width:103.5px;text-align:right;top:595px">11250</div>
<div class="cell num" style="left:271px;width:103.5px;text-align:right;top:595px">45</div>
<div class="cell num" style="left:376px;width:59.5px;text-align:right;top:595px">1.7470468</div>
<div class="cell num" style="left:437px;width:42.5px;text-align:right;top:595px">45</div>
<div class="cell num" style="left:26px;width:44.5px;text-align:right;top:609px">19</div>
<div class="cell num" style="left:72px;width:92.5px;text-align:right;top:609px">50</div>
<div class="cell num" style="left:166px;width:103.5px;text-align:right;top:609px">11591</div>
<div class="cell num" style="left:271px;width:103.5px;text-align:right;top:609px">50</div>
<div class="cell num" style="left:376px;width:59.5px;text-align:right;top:609px">1.7715814</div>
<div class="cell num" style="left:437px;width:42.5px;text-align:right;top:609px">50</div>
<div class="cell num" style="left:26px;width:44.5px;text-align:right;top:623px">20</div>
<div class="cell num" style="left:72px;width:92.5px;text-align:right;top:623px">55</div>
<div class="cell num" style="left:166px;width:103.5px;text-align:right;top:623px">11940</div>
<div class="cell num" style="left:271px;width:103.5px;text-align:right;top:623px">55</div>
<div class="cell num" style="left:376px;width:59.5px;text-align:right;top:623px">1.7958777</div>
<div class="cell num" style="left:437px;width:42.5px;text-align:right;top:623px">55</div>
<div class="cell num" style="left:26px;width:44.5px;text-align:right;top:637px">21</div>
<div class="cell num" style="left:72px;width:92.5px;text-align:right;top:637px">60</div>
<div class="cell num" style="left:166px;width:103.5px;text-align:right;top:637px">12296</div>
<div class="cell num" style="left:271px;width:103.5px;text-align:right;top:637px">60</div>
<div class="cell num" style="left:376px;width:59.5px;text-align:right;top:637px">1.8199273</div>
<div class="cell num" style="left:437px;width:42.5px;text-align:right;top:637px">60</div>
<div class="cell num" style="left:26px;width:44.5px;text-align:right;top:651px">22</div>
<div class="cell num" style="left:72px;width:92.5px;text-align:right;top:651px">65</div>
<div class="cell num" style="left:166px;width:103.5px;text-align:right;top:651px">12661</div>
<div class="cell num" style="left:271px;width:103.5px;text-align:right;top:651px">65</div>
<div class="cell num" style="left:376px;width:59.5px;text-align:right;top:651px">1.8437233</div>
<div class="cell num" style="left:437px;width:42.5px;text-align:right;top:651px">65</div>
<div class="cell num" style="left:26px;width:44.5px;text-align:right;top:665px">23</div>
<div class="cell num" style="left:72px;width:92.5px;text-align:right;top:665px">70</div>
<div class="cell num" style="left:166px;width:103.5px;text-align:right;top:665px">13033</div>
<div class="cell num" style="left:271px;width:103.5px;text-align:right;top:665px">70</div>
<div class="cell num" style="left:376px;width:59.5px;text-align:right;top:665px">1.86726</div>
<div class="cell num" style="left:437px;width:42.5px;text-align:right;top:665px">70</div>
<div class="cell num" style="left:26px;width:44.5px;text-align:right;top:679px">24</div>
<div class="cell num" style="left:72px;width:92.5px;text-align:right;top:679px">75</div>
<div class="cell num" style="left:166px;width:103.5px;text-align:right;top:679px">13413</div>
<div class="cell num" style="left:271px;width:103.5px;text-align:right;top:679px">75</div>
<div class="cell num" style="left:376px;width:59.5px;text-align:right;top:679px">1.8905329</div>
<div class="cell num" style="left:437px;width:42.5px;text-align:right;top:679px">75</div>
<div class="cell num" style="left:26px;width:44.5px;text-align:right;top:693px">25</div>
<div class="cell num" style="left:72px;width:92.5px;text-align:right;top:693px">80</div>
<div class="cell num" style="left:166px;width:103.5px;text-align:right;top:693px">13802</div>
<div class="cell num" style="left:271px;width:103.5px;text-align:right;top:693px">80</div>
<div class="cell num" style="left:376px;width:59.5px;text-align:right;top:693px">1.9135386</div>
<div class="cell num" style="left:437px;width:42.5px;text-align:right;top:693px">80</div>
<div class="cell num" style="left:26px;width:44.5px;text-align:right;top:707px">26</div>
<div class="cell num" style="left:72px;width:92.5px;text-align:right;top:707px">85</div>
<div class="cell num" style="left:166px;width:103.5px;text-align:right;top:707px">14198</div>
<div class="cell num" style="left:271px;width:103.5px;text-align:right;top:707px">85</div>
<div class="cell num" style="left:376px;width:59.5px;text-align:right;top:707px">1.9362746</div>
<div class="cell num" style="left:437px;width:42.5px;text-align:right;top:707px">85</div>
<div class="cell num" style="left:26px;width:44.5px;text-align:right;top:721px">27</div>
<div class="cell num" style="left:72px;width:92.5px;text-align:right;top:721px">90</div>
<div class="cell num" style="left:166px;width:103.5px;text-align:right;top:721px">14604</div>
<div class="cell num" style="left:271px;width:103.5px;text-align:right;top:721px">90</div>
<div class="cell num" style="left:376px;width:59.5px;text-align:right;top:721px">1.9587392</div>
<div class="cell num" style="left:437px;width:42.5px;text-align:right;top:721px">90</div>
<div class="cell num" style="left:26px;width:44.5px;text-align:right;top:735px">28</div>
<div class="cell num" style="left:72px;width:92.5px;text-align:right;top:735px">95</div>
<div class="cell num" style="left:166px;width:103.5px;text-align:right;top:735px">15018</div>
<div class="cell num" style="left:271px;width:103.5px;text-align:right;top:735px">95</div>
<div class="cell num" style="left:376px;width:59.5px;text-align:right;top:735px">1.9809315</div>
<div class="cell num" style="left:437px;width:42.5px;text-align:right;top:735px">95</div>
<div class="cell num" style="left:26px;width:44.5px;text-align:right;top:749px">29</div>
<div class="cell num" style="left:72px;width:92.5px;text-align:right;top:749px">100</div>
<div class="cell num" style="left:166px;width:103.5px;text-align:right;top:749px">15440</div>
<div class="cell num" style="left:271px;width:103.5px;text-align:right;top:749px">100</div>
<div class="cell num" style="left:376px;width:59.5px;text-align:right;top:749px">2.0028512</div>
<div class="cell num" style="left:437px;width:42.5px;text-align:right;top:749px">100</div>
<div class="cell num" style="left:26px;width:44.5px;text-align:right;top:763px">30</div>
<div class="cell num" style="left:72px;width:92.5px;text-align:right;top:763px">105</div>
<div class="cell num" style="left:166px;width:103.5px;text-align:right;top:763px">15872</div>
<div class="cell num" style="left:271px;width:103.5px;text-align:right;top:763px">105</div>
<div class="cell num" style="left:376px;width:59.5px;text-align:right;top:763px">2.0244985</div>
<div class="cell num" style="left:437px;width:42.5px;text-align:right;top:763px">105</div>
<div class="cell num" style="left:26px;width:44.5px;text-align:right;top:777px">31</div>
<div class="cell num" style="left:72px;width:92.5px;text-align:right;top:777px">110</div>
<div class="cell num" style="left:166px;width:103.5px;text-align:right;top:777px">16313</div>
<div class="cell num" style="left:271px;width:103.5px;text-align:right;top:777px">110</div>
<div class="cell num" style="left:376px;width:59.5px;text-align:right;top:777px">2.0458743</div>
<div class="cell num" style="left:437px;width:42.5px;text-align:right;top:777px">110</div>
<div class="cell num" style="left:26px;width:44.5px;text-align:right;top:791px">32</div>
<div class="cell num" style="left:72px;width:92.5px;text-align:right;top:791px">115</div>
<div class="cell num" style="left:166px;width:103.5px;text-align:right;top:791px">16764</div>
<div class="cell num" style="left:271px;width:103.5px;text-align:right;top:791px">115</div>
<div class="cell num" style="left:376px;width:59.5px;text-align:right;top:791px">2.0669795</div>
<div class="cell num" style="left:437px;width:42.5px;text-align:right;top:791px">115</div>
<div class="cell num" style="left:26px;width:44.5px;text-align:right;top:805px">33</div>
<div class="cell num" style="left:72px;width:92.5px;text-align:right;top:805px">120</div>
<div class="cell num" style="left:166px;width:103.5px;text-align:right;top:805px">17224</div>
<div class="cell num" style="left:271px;width:103.5px;text-align:right;top:805px">120</div>
<div class="cell num" style="left:376px;width:59.5px;text-align:right;top:805px">2.0878159</div>
<div class="cell num" style="left:437px;width:42.5px;text-align:right;top:805px">120</div>
<div class="cell num" style="left:26px;width:44.5px;text-align:right;top:819px">34</div>
<div class="cell num" style="left:72px;width:92.5px;text-align:right;top:819px">125</div>
<div class="cell num" style="left:166px;width:103.5px;text-align:right;top:819px">17694</div>
<div class="cell num" style="left:271px;width:103.5px;text-align:right;top:819px">125</div>
<div class="cell num" style="left:376px;width:59.5px;text-align:right;top:819px">2.108385</div>
<div class="cell num" style="left:437px;width:42.5px;text-align:right;top:819px">125</div>
<div class="cell num" style="left:26px;width:44.5px;text-align:right;top:833px">35</div>
<div class="cell num" style="left:72px;width:92.5px;text-align:right;top:833px">130</div>
<div class="cell num" style="left:166px;width:103.5px;text-align:right;top:833px">18174</div>
<div class="cell num" style="left:271px;width:103.5px;text-align:right;top:833px">130</div>
<div class="cell num" style="left:376px;width:59.5px;text-align:right;top:833px">2.1286891</div>
<div class="cell num" style="left:437px;width:42.5px;text-align:right;top:833px">130</div>
<div class="cell num" style="left:26px;width:44.5px;text-align:right;top:847px">36</div>
<div class="cell num" style="left:72px;width:92.5px;text-align:right;top:847px">135</div>
<div class="cell num" style="left:166px;width:103.5px;text-align:right;top:847px">18664</div>
<div class="cell num" style="left:271px;width:103.5px;text-align:right;top:847px">135</div>
<div class="cell num" style="left:376px;width:59.5px;text-align:right;top:847px">2.1487303</div>
<div class="cell num" style="left:437px;width:42.5px;text-align:right;top:847px">135</div>
<div class="cell num" style="left:26px;width:44.5px;text-align:right;top:861px">37</div>
<div class="cell num" style="left:72px;width:92.5px;text-align:right;top:861px">140</div>
<div class="cell num" style="left:166px;width:103.5px;text-align:right;top:861px">19165</div>
<div class="cell num" style="left:271px;width:103.5px;text-align:right;top:861px">140</div>
<div class="cell num" style="left:376px;width:59.5px;text-align:right;top:861px">2.1685111</div>
<div class="cell num" style="left:437px;width:42.5px;text-align:right;top:861px">140</div>
<div class="cell num" style="left:26px;width:44.5px;text-align:right;top:875px">38</div>
<div class="cell num" style="left:72px;width:92.5px;text-align:right;top:875px">145</div>
<div class="cell num" style="left:166px;width:103.5px;text-align:right;top:875px">19677</div>
<div class="cell num" style="left:271px;width:103.5px;text-align:right;top:875px">145</div>
<div class="cell num" style="left:376px;width:59.5px;text-align:right;top:875px">2.1880339</div>
<div class="cell num" style="left:437px;width:42.5px;text-align:right;top:875px">145</div>
<div class="cell num" style="left:26px;width:44.5px;text-align:right;top:889px">39</div>
<div class="cell num" style="left:72px;width:92.5px;text-align:right;top:889px">150</div>
<div class="cell num" style="left:166px;width:103.5px;text-align:right;top:889px">20200</div>
<div class="cell num" style="left:271px;width:103.5px;text-align:right;top:889px">150</div>
<div class="cell num" style="left:376px;width:59.5px;text-align:right;top:889px">2.2073014</div>
<div class="cell num" style="left:437px;width:42.5px;text-align:right;top:889px">150</div>
<div class="cell num" style="left:633px;width:44px;text-align:center;top:315px">1</div>
<div class="cell num" style="left:633px;width:44px;text-align:center;top:329px">2</div>
<div class="cell num" style="left:633px;width:44px;text-align:center;top:343px">3</div>
<div class="cell" style="left:678px;top:315px">Get total resistance by adding RBias resistance with typical resistance</div>
<div class="cell" style="left:678px;top:329px">Take VBias and divide it by the total resistance to get the current flowing through the divider</div>
<div class="cell" style="left:678px;top:343px">Get the voltage in the divider by multiplying the the Typical Resistance by the total current</div>
<div class="cell" style="left:1148px;top:329px;width:5px;overflow:hidden;direction:rtl">divider</div>
<div class="cell" style="left:1149px;top:343px">total current</div>
<div class="cell" style="left:572px;top:385px">X Y Scatter plot</div>
<div class="cell" style="left:1382px;top:315px">Format</div>
<div class="cell" style="left:1382px;top:329px">##0.0000E+0</div>
<svg class="a" style="left:0;top:0" width="1920" height="1030"><path d="M376,357 H438 V903 H376 Z" fill="none" stroke="#8048c8" stroke-width="2"/><path d="M438,357 H482 V903 H438" fill="none" stroke="#2f6fd0" stroke-width="2"/><path d="M438,343 H482 V356" fill="none" stroke="#c8323c" stroke-width="2"/><path d="M438,343 V356" fill="none" stroke="#c8323c" stroke-width="2"/><rect x="374" y="355" width="5" height="5" fill="#8048c8"/><rect x="436" y="355" width="5" height="5" fill="#8048c8"/><rect x="374" y="901" width="5" height="5" fill="#8048c8"/><rect x="436" y="901" width="5" height="5" fill="#8048c8"/><rect x="480" y="355" width="5" height="5" fill="#2f6fd0"/><rect x="480" y="901" width="5" height="5" fill="#2f6fd0"/><rect x="436" y="341" width="5" height="5" fill="#c8323c"/><rect x="480" y="341" width="5" height="5" fill="#c8323c"/></svg>
<svg class="a" style="left:0;top:0" width="1920" height="1030" font-family=""Liberation Sans", sans-serif"><rect x="1895" y="244" width="25" height="729" fill="#e6e6e6"/><rect x="1898" y="268" width="19" height="687" fill="#dadada"/><rect x="1898.5" y="249.5" width="18" height="18" fill="#fff" stroke="#c6c6c6"/><polygon points="1903.5,261 1911.5,261 1907.5,256" fill="#777"/><rect x="1898.5" y="268.5" width="18" height="108" fill="#fff" stroke="#ababab"/><rect x="1898.5" y="955.5" width="18" height="18" fill="#fff" stroke="#c6c6c6"/><polygon points="1903.5,962 1911.5,962 1907.5,967" fill="#777"/><line x1="1894.5" y1="259" x2="1894.5" y2="973" stroke="#9b9b9b"/><rect x="0" y="973" width="1920" height="29" fill="#e6e6e6"/><line x1="0" y1="973.5" x2="1898" y2="973.5" stroke="#ababab"/><polygon points="34,983 34,993 29,988" fill="#b8b8b8"/><polygon points="57,983 57,993 62,988" fill="#b8b8b8"/><rect x="103" y="973" width="80" height="26" fill="#fff"/><rect x="103" y="997" width="80" height="2" fill="#217346"/><line x1="103.5" y1="973" x2="103.5" y2="998" stroke="#c6c6c6"/><line x1="182.5" y1="973" x2="182.5" y2="998" stroke="#c6c6c6"/><text x="115.5" y="990" font-size="16" fill="#217346" text-anchor="start" font-weight="bold" >Sheet1</text><text x="195" y="990" font-size="16.6" fill="#444" text-anchor="start" font-weight="normal" >Sheet2</text><line x1="260.5" y1="977" x2="260.5" y2="997" stroke="#ababab"/><circle cx="304" cy="988" r="9.5" fill="none" stroke="#777" stroke-width="1.2"/><path d="M299,988 h10 M304,983 v10" stroke="#777" stroke-width="1.6"/><rect x="1149.5" y="982" width="2" height="2" fill="#a8a8a8"/><rect x="1149.5" y="986" width="2" height="2" fill="#a8a8a8"/><rect x="1149.5" y="990" width="2" height="2" fill="#a8a8a8"/><rect x="1167" y="978" width="730" height="19" fill="#dadada"/><rect x="1167.5" y="978.5" width="18" height="18" fill="#fff" stroke="#c6c6c6"/><polygon points="1179,983.5 1179,991.5 1174,987.5" fill="#777"/><rect x="1185.5" y="978.5" width="499" height="18" fill="#fff" stroke="#ababab"/><rect x="1878.5" y="978.5" width="18" height="18" fill="#fff" stroke="#c6c6c6"/><polygon points="1885,983.5 1885,991.5 1890,987.5" fill="#777"/><rect x="0" y="1002" width="1920" height="28" fill="#f3f3f3"/><line x1="0" y1="1002.5" x2="1920" y2="1002.5" stroke="#d4d4d4"/><text x="8" y="1021" font-size="13.5" fill="#444" text-anchor="start" font-weight="normal" >Ready</text><rect x="1591" y="1003" width="42" height="27" fill="#d4d4d4"/><rect x="1603.5" y="1009.5" width="16" height="14" fill="none" stroke="#777"/><path d="M1603.5,1014.5 h16 M1603.5,1019 h16 M1608.5,1009.5 v14 M1614,1009.5 v14" stroke="#777"/><rect x="1645.5" y="1009.5" width="17" height="14" fill="none" stroke="#777"/><rect x="1648.5" y="1011.5" width="11" height="10" fill="none" stroke="#777"/><path d="M1650.5,1014.5 h7 M1650.5,1016.5 h7 M1650.5,1018.5 h7" stroke="#777" stroke-width="0.8"/><rect x="1686.5" y="1009.5" width="17" height="14" fill="none" stroke="#777"/><path d="M1691.5,1009.5 v8 h5 v-8" fill="none" stroke="#777"/><rect x="1722" y="1015" width="8" height="2" fill="#666"/><rect x="1736" y="1016" width="124" height="1" fill="#aaa"/><rect x="1798" y="1012" width="1" height="8" fill="#aaa"/><rect x="1766" y="1009" width="5" height="14" fill="#666"/><path d="M1865,1016 h9 M1869.5,1011.5 v9" stroke="#666" stroke-width="2"/><text x="1887" y="1021" font-size="11.8" fill="#444" text-anchor="start" font-weight="normal" >55%</text></svg>
<div class="a" style="left:1862px;top:348px;width:32px;height:454px;background:#fff;border-left:1px solid #dcdcdc;border-top:1px solid #d4d4d4;border-bottom:1px solid #d4d4d4"></div><div class="a" style="left:1857px;top:911px;width:37px;height:62px;background:#fff;border-left:2px solid #d8d8d8;border-top:2px solid #d4d4d4"></div>
<svg class="a" style="left:0;top:0" width="1920" height="1030" font-family=""Liberation Sans", sans-serif"><rect x="538" y="401" width="838" height="467" fill="#fff"/><line x1="606.5" y1="444.6" x2="1290.0" y2="444.6" stroke="#d9d9d9" stroke-width="1.2"/><line x1="606.5" y1="517.4" x2="1290.0" y2="517.4" stroke="#d9d9d9" stroke-width="1.2"/><line x1="606.5" y1="590.1" x2="1290.0" y2="590.1" stroke="#d9d9d9" stroke-width="1.2"/><line x1="606.5" y1="662.9" x2="1290.0" y2="662.9" stroke="#d9d9d9" stroke-width="1.2"/><line x1="606.5" y1="735.6" x2="1290.0" y2="735.6" stroke="#d9d9d9" stroke-width="1.2"/><line x1="606.5" y1="808.4" x2="1290.0" y2="808.4" stroke="#d9d9d9" stroke-width="1.2"/><line x1="606.5" y1="444.6" x2="606.5" y2="808.4" stroke="#d9d9d9" stroke-width="1.2"/><line x1="743.2" y1="444.6" x2="743.2" y2="808.4" stroke="#d9d9d9" stroke-width="1.2"/><line x1="879.9" y1="444.6" x2="879.9" y2="808.4" stroke="#d9d9d9" stroke-width="1.2"/><line x1="1016.6" y1="444.6" x2="1016.6" y2="808.4" stroke="#d9d9d9" stroke-width="1.2"/><line x1="1153.3" y1="444.6" x2="1153.3" y2="808.4" stroke="#d9d9d9" stroke-width="1.2"/><line x1="1290.0" y1="444.6" x2="1290.0" y2="808.4" stroke="#d9d9d9" stroke-width="1.2"/><line x1="606.5" y1="735.6" x2="1290.0" y2="735.6" stroke="#c8c8c8" stroke-width="1.2"/><text x="592" y="448.8" font-size="13" fill="#595959" text-anchor="end">200</text><text x="592" y="521.6" font-size="13" fill="#595959" text-anchor="end">150</text><text x="592" y="594.3" font-size="13" fill="#595959" text-anchor="end">100</text><text x="592" y="667.1" font-size="13" fill="#595959" text-anchor="end">50</text><text x="592" y="739.8" font-size="13" fill="#595959" text-anchor="end">0</text><text x="592" y="812.6" font-size="13" fill="#595959" text-anchor="end">-50</text><text x="606.5" y="832" font-size="13" fill="#595959" text-anchor="middle">0</text><text x="743.2" y="832" font-size="13" fill="#595959" text-anchor="middle">0.5</text><text x="879.9" y="832" font-size="13" fill="#595959" text-anchor="middle">1</text><text x="1016.6" y="832" font-size="13" fill="#595959" text-anchor="middle">1.5</text><text x="1153.3" y="832" font-size="13" fill="#595959" text-anchor="middle">2</text><text x="1290.0" y="832" font-size="13" fill="#595959" text-anchor="middle">2.5</text><text x="948" y="853" font-size="13.5" fill="#595959" text-anchor="middle">Axis Title</text><text x="0" y="0" font-size="13.5" fill="#595959" text-anchor="middle" transform="translate(564,625) rotate(-90)">Axis Title</text><line x1="1312" y1="649.5" x2="1332" y2="649.5" stroke="#4472c4" stroke-width="3"/><text x="1333" y="654" font-size="13" fill="#595959">Temp</text><polyline points="965.2,793.8 972.1,786.6 979.0,779.3 986.0,772.0 993.1,764.7 1000.1,757.5 1007.2,750.2 1014.4,742.9 1021.5,735.6 1028.6,728.4 1035.7,721.1 1042.7,713.8 1049.7,706.5 1056.7,699.3 1063.7,692.0 1070.5,684.7 1077.4,677.4 1084.1,670.2 1090.9,662.9 1097.5,655.6 1104.1,648.3 1110.6,641.1 1117.0,633.8 1123.4,626.5 1129.7,619.2 1135.9,611.9 1142.0,604.7 1148.1,597.4 1154.1,590.1 1160.0,582.8 1165.8,575.6 1171.6,568.3 1177.3,561.0 1182.9,553.7 1188.5,546.5 1194.0,539.2 1199.4,531.9 1204.7,524.6 1210.0,517.4" fill="none" stroke="#4472c4" stroke-width="2.7" stroke-linejoin="round"/><circle cx="962.6" cy="791.2" r="2.5" fill="#bddbf6" stroke="#1a7fe0" stroke-width="1.2"/><circle cx="962.6" cy="796.4" r="2.5" fill="#bddbf6" stroke="#1a7fe0" stroke-width="1.2"/><circle cx="967.8" cy="791.2" r="2.5" fill="#bddbf6" stroke="#1a7fe0" stroke-width="1.2"/><circle cx="967.8" cy="796.4" r="2.5" fill="#bddbf6" stroke="#1a7fe0" stroke-width="1.2"/><circle cx="976.4" cy="776.7" r="2.5" fill="#bddbf6" stroke="#1a7fe0" stroke-width="1.2"/><circle cx="976.4" cy="781.9" r="2.5" fill="#bddbf6" stroke="#1a7fe0" stroke-width="1.2"/><circle cx="981.6" cy="776.7" r="2.5" fill="#bddbf6" stroke="#1a7fe0" stroke-width="1.2"/><circle cx="981.6" cy="781.9" r="2.5" fill="#bddbf6" stroke="#1a7fe0" stroke-width="1.2"/><circle cx="990.5" cy="762.1" r="2.5" fill="#bddbf6" stroke="#1a7fe0" stroke-width="1.2"/><circle cx="990.5" cy="767.3" r="2.5" fill="#bddbf6" stroke="#1a7fe0" stroke-width="1.2"/><circle cx="995.7" cy="762.1" r="2.5" fill="#bddbf6" stroke="#1a7fe0" stroke-width="1.2"/><circle cx="995.7" cy="767.3" r="2.5" fill="#bddbf6" stroke="#1a7fe0" stroke-width="1.2"/><circle cx="1011.8" cy="740.3" r="2.5" fill="#bddbf6" stroke="#1a7fe0" stroke-width="1.2"/><circle cx="1011.8" cy="745.5" r="2.5" fill="#bddbf6" stroke="#1a7fe0" stroke-width="1.2"/><circle cx="1017.0" cy="740.3" r="2.5" fill="#bddbf6" stroke="#1a7fe0" stroke-width="1.2"/><circle cx="1017.0" cy="745.5" r="2.5" fill="#bddbf6" stroke="#1a7fe0" stroke-width="1.2"/><circle cx="1026.0" cy="725.8" r="2.5" fill="#bddbf6" stroke="#1a7fe0" stroke-width="1.2"/><circle cx="1026.0" cy="731.0" r="2.5" fill="#bddbf6" stroke="#1a7fe0" stroke-width="1.2"/><circle cx="1031.2" cy="725.8" r="2.5" fill="#bddbf6" stroke="#1a7fe0" stroke-width="1.2"/><circle cx="1031.2" cy="731.0" r="2.5" fill="#bddbf6" stroke="#1a7fe0" stroke-width="1.2"/><circle cx="1047.1" cy="703.9" r="2.5" fill="#bddbf6" stroke="#1a7fe0" stroke-width="1.2"/><circle cx="1047.1" cy="709.1" r="2.5" fill="#bddbf6" stroke="#1a7fe0" stroke-width="1.2"/><circle cx="1052.3" cy="703.9" r="2.5" fill="#bddbf6" stroke="#1a7fe0" stroke-width="1.2"/><circle cx="1052.3" cy="709.1" r="2.5" fill="#bddbf6" stroke="#1a7fe0" stroke-width="1.2"/><circle cx="1061.1" cy="689.4" r="2.5" fill="#bddbf6" stroke="#1a7fe0" stroke-width="1.2"/><circle cx="1061.1" cy="694.6" r="2.5" fill="#bddbf6" stroke="#1a7fe0" stroke-width="1.2"/><circle cx="1066.3" cy="689.4" r="2.5" fill="#bddbf6" stroke="#1a7fe0" stroke-width="1.2"/><circle cx="1066.3" cy="694.6" r="2.5" fill="#bddbf6" stroke="#1a7fe0" stroke-width="1.2"/><circle cx="1081.5" cy="667.6" r="2.5" fill="#bddbf6" stroke="#1a7fe0" stroke-width="1.2"/><circle cx="1081.5" cy="672.8" r="2.5" fill="#bddbf6" stroke="#1a7fe0" stroke-width="1.2"/><circle cx="1086.7" cy="667.6" r="2.5" fill="#bddbf6" stroke="#1a7fe0" stroke-width="1.2"/><circle cx="1086.7" cy="672.8" r="2.5" fill="#bddbf6" stroke="#1a7fe0" stroke-width="1.2"/><circle cx="1094.9" cy="653.0" r="2.5" fill="#bddbf6" stroke="#1a7fe0" stroke-width="1.2"/><circle cx="1094.9" cy="658.2" r="2.5" fill="#bddbf6" stroke="#1a7fe0" stroke-width="1.2"/><circle cx="1100.1" cy="653.0" r="2.5" fill="#bddbf6" stroke="#1a7fe0" stroke-width="1.2"/><circle cx="1100.1" cy="658.2" r="2.5" fill="#bddbf6" stroke="#1a7fe0" stroke-width="1.2"/><circle cx="1108.0" cy="638.5" r="2.5" fill="#bddbf6" stroke="#1a7fe0" stroke-width="1.2"/><circle cx="1108.0" cy="643.7" r="2.5" fill="#bddbf6" stroke="#1a7fe0" stroke-width="1.2"/><circle cx="1113.2" cy="638.5" r="2.5" fill="#bddbf6" stroke="#1a7fe0" stroke-width="1.2"/><circle cx="1113.2" cy="643.7" r="2.5" fill="#bddbf6" stroke="#1a7fe0" stroke-width="1.2"/><circle cx="1127.1" cy="616.6" r="2.5" fill="#bddbf6" stroke="#1a7fe0" stroke-width="1.2"/><circle cx="1127.1" cy="621.8" r="2.5" fill="#bddbf6" stroke="#1a7fe0" stroke-width="1.2"/><circle cx="1132.3" cy="616.6" r="2.5" fill="#bddbf6" stroke="#1a7fe0" stroke-width="1.2"/><circle cx="1132.3" cy="621.8" r="2.5" fill="#bddbf6" stroke="#1a7fe0" stroke-width="1.2"/><circle cx="1139.4" cy="602.1" r="2.5" fill="#bddbf6" stroke="#1a7fe0" stroke-width="1.2"/><circle cx="1139.4" cy="607.3" r="2.5" fill="#bddbf6" stroke="#1a7fe0" stroke-width="1.2"/><circle cx="1144.6" cy="602.1" r="2.5" fill="#bddbf6" stroke="#1a7fe0" stroke-width="1.2"/><circle cx="1144.6" cy="607.3" r="2.5" fill="#bddbf6" stroke="#1a7fe0" stroke-width="1.2"/><circle cx="1157.4" cy="580.2" r="2.5" fill="#bddbf6" stroke="#1a7fe0" stroke-width="1.2"/><circle cx="1157.4" cy="585.4" r="2.5" fill="#bddbf6" stroke="#1a7fe0" stroke-width="1.2"/><circle cx="1162.6" cy="580.2" r="2.5" fill="#bddbf6" stroke="#1a7fe0" stroke-width="1.2"/><circle cx="1162.6" cy="585.4" r="2.5" fill="#bddbf6" stroke="#1a7fe0" stroke-width="1.2"/><circle cx="1169.0" cy="565.7" r="2.5" fill="#bddbf6" stroke="#1a7fe0" stroke-width="1.2"/><circle cx="1169.0" cy="570.9" r="2.5" fill="#bddbf6" stroke="#1a7fe0" stroke-width="1.2"/><circle cx="1174.2" cy="565.7" r="2.5" fill="#bddbf6" stroke="#1a7fe0" stroke-width="1.2"/><circle cx="1174.2" cy="570.9" r="2.5" fill="#bddbf6" stroke="#1a7fe0" stroke-width="1.2"/><circle cx="1185.9" cy="543.9" r="2.5" fill="#bddbf6" stroke="#1a7fe0" stroke-width="1.2"/><circle cx="1185.9" cy="549.1" r="2.5" fill="#bddbf6" stroke="#1a7fe0" stroke-width="1.2"/><circle cx="1191.1" cy="543.9" r="2.5" fill="#bddbf6" stroke="#1a7fe0" stroke-width="1.2"/><circle cx="1191.1" cy="549.1" r="2.5" fill="#bddbf6" stroke="#1a7fe0" stroke-width="1.2"/><circle cx="1196.8" cy="529.3" r="2.5" fill="#bddbf6" stroke="#1a7fe0" stroke-width="1.2"/><circle cx="1196.8" cy="534.5" r="2.5" fill="#bddbf6" stroke="#1a7fe0" stroke-width="1.2"/><circle cx="1202.0" cy="529.3" r="2.5" fill="#bddbf6" stroke="#1a7fe0" stroke-width="1.2"/><circle cx="1202.0" cy="534.5" r="2.5" fill="#bddbf6" stroke="#1a7fe0" stroke-width="1.2"/><rect x="538" y="401" width="838" height="467" fill="none" stroke="#8f8f8f" stroke-width="1.8"/><circle cx="538" cy="401" r="5.6" fill="#fff" stroke="#8f8f8f" stroke-width="2.2"/><circle cx="538" cy="634.5" r="5.6" fill="#fff" stroke="#8f8f8f" stroke-width="2.2"/><circle cx="538" cy="868" r="5.6" fill="#fff" stroke="#8f8f8f" stroke-width="2.2"/><circle cx="957.0" cy="401" r="5.6" fill="#fff" stroke="#8f8f8f" stroke-width="2.2"/><circle cx="957.0" cy="868" r="5.6" fill="#fff" stroke="#8f8f8f" stroke-width="2.2"/><circle cx="1376" cy="401" r="5.6" fill="#fff" stroke="#8f8f8f" stroke-width="2.2"/><circle cx="1376" cy="634.5" r="5.6" fill="#fff" stroke="#8f8f8f" stroke-width="2.2"/><circle cx="1376" cy="868" r="5.6" fill="#fff" stroke="#8f8f8f" stroke-width="2.2"/><rect x="1391.5" y="400.5" width="34" height="34" fill="#fff" stroke="#a0a0a0" stroke-width="1"/><rect x="1391.5" y="447.5" width="34" height="34" fill="#fff" stroke="#a0a0a0" stroke-width="1"/><rect x="1391.5" y="494.5" width="34" height="34" fill="#fff" stroke="#a0a0a0" stroke-width="1"/><path d="M1401,417.5 h14 M1408,410.5 v14" stroke="#5ea284" stroke-width="3"/><path d="M1417,455 l-5.5,7.5" stroke="#707070" stroke-width="3.2"/><path d="M1411,463.5 l-2,2" stroke="#fff" stroke-width="1"/><path d="M1399,472.5 c4,-0.5 8,-1.5 9.5,-4.5 c1,-2 -0.5,-4 -2.5,-4 c-2.5,0 -4,2 -7,8.5 z" fill="#3f7fcc"/><path d="M1405,466 c1,-1 2.5,-1 2.5,0.5" stroke="#cfe0f5" stroke-width="1.2" fill="none"/><polygon points="1398.5,503.5 1417.5,503.5 1410,512 1410,520 1406,520 1406,512" fill="#777"/><polygon points="1401.5,505 1404,505 1407.5,511.5 1407.5,518.5 1406.8,518.5 1406.8,512" fill="#fff"/></svg>
<div class="a" style="left:935px;top:165px;width:214px;height:300px;background:#fff;border:1px solid #c6c6c6;box-shadow:1px 2px 4px rgba(0,0,0,0.15)"></div><svg class="a" style="left:0;top:0" width="1920" height="1030" font-family=""Liberation Sans", sans-serif"><rect x="937" y="167" width="210" height="27" fill="#e9e9e9"/><text x="946" y="186" font-size="14.3" font-weight="bold" fill="#5f5f5f">Scatter</text><rect x="937" y="335" width="210" height="26" fill="#e9e9e9"/><text x="946" y="353" font-size="14.3" font-weight="bold" fill="#5f5f5f">Bubble</text><path d="M952.5,210 v36.5 h40" fill="none" stroke="#7a7a7a" stroke-width="1.2"/><circle cx="958.5" cy="214.5" r="2.3" fill="#fff" stroke="#7a7a7a" stroke-width="1"/><circle cx="985" cy="216.5" r="2.3" fill="#fff" stroke="#7a7a7a" stroke-width="1"/><circle cx="966.5" cy="227.5" r="2.6999999999999997" fill="#7a7a7a"/><circle cx="980.5" cy="232.5" r="2.6999999999999997" fill="#7a7a7a"/><circle cx="966.5" cy="236.5" r="2.3" fill="#fff" stroke="#7a7a7a" stroke-width="1"/><circle cx="974.5" cy="241.5" r="2.3" fill="#fff" stroke="#7a7a7a" stroke-width="1"/><circle cx="957.5" cy="242" r="2.6999999999999997" fill="#7a7a7a"/><circle cx="984.5" cy="243" r="2.6999999999999997" fill="#7a7a7a"/><path d="M1022.5,210 v36.5 h40" fill="none" stroke="#7a7a7a" stroke-width="1.2"/><path d="M1029,215.5 c4,10 10,22 22,26 M1028,241 c2,-14 8,-25 15,-24.5 c6,0.5 9,5 10,10 v14 M1049,241 c5,-5 7,-15 6,-24.5" fill="none" stroke="#999" stroke-width="1"/><circle cx="1029" cy="215.5" r="2.3" fill="#fff" stroke="#7a7a7a" stroke-width="1"/><circle cx="1056.5" cy="218" r="2.3" fill="#fff" stroke="#7a7a7a" stroke-width="1"/><circle cx="1038" cy="221.5" r="2.6999999999999997" fill="#7a7a7a"/><circle cx="1052.5" cy="228.5" r="2.6999999999999997" fill="#7a7a7a"/><circle cx="1039.5" cy="236.5" r="2.3" fill="#fff" stroke="#7a7a7a" stroke-width="1"/><circle cx="1046" cy="240.5" r="2.3" fill="#fff" stroke="#7a7a7a" stroke-width="1"/><circle cx="1028" cy="241" r="2.6999999999999997" fill="#7a7a7a"/><circle cx="1053" cy="241" r="2.6999999999999997" fill="#7a7a7a"/><path d="M1092.5,210 v36.5 h40" fill="none" stroke="#7a7a7a" stroke-width="1.2"/><path d="M1098,218 c3,10 8,19 16,21 c8,1 11,-4 12,-10 v-15 M1103,242 c2,-8 6,-15 12,-16 c6,-1 11,6 11,17" fill="none" stroke="#7a7a7a" stroke-width="1.1"/><path d="M952.5,280 v36.5 h40" fill="none" stroke="#7a7a7a" stroke-width="1.2"/><path d="M959,288 l9,19 M960,310 l8,-23 l16,20 M967,306 l18,-19" fill="none" stroke="#999" stroke-width="1"/><circle cx="959.5" cy="288" r="2.3" fill="#fff" stroke="#7a7a7a" stroke-width="1"/><circle cx="985.5" cy="289" r="2.3" fill="#fff" stroke="#7a7a7a" stroke-width="1"/><circle cx="968" cy="292" r="2.6999999999999997" fill="#7a7a7a"/><circle cx="982" cy="298" r="2.6999999999999997" fill="#7a7a7a"/><circle cx="967" cy="306" r="2.3" fill="#fff" stroke="#7a7a7a" stroke-width="1"/><circle cx="975" cy="310" r="2.3" fill="#fff" stroke="#7a7a7a" stroke-width="1"/><circle cx="960" cy="310" r="2.6999999999999997" fill="#7a7a7a"/><circle cx="985" cy="309" r="2.6999999999999997" fill="#7a7a7a"/><path d="M1022.5,280 v36.5 h40" fill="none" stroke="#7a7a7a" stroke-width="1.2"/><path d="M1026,284 L1035,305 L1039,295 L1054,312 M1029,310 L1051.5,286 L1045,307 M1051,301 L1054,312" fill="none" stroke="#888" stroke-width="1"/><path d="M952.5,377 v36.5 h40" fill="none" stroke="#7a7a7a" stroke-width="1.2"/><circle cx="966.5" cy="386.5" r="6.3" fill="#7a7a7a"/><circle cx="978.5" cy="393.5" r="4.3" fill="#7a7a7a"/><circle cx="963.5" cy="400.5" r="6" fill="#fff" stroke="#7a7a7a" stroke-width="1.1"/><circle cx="978" cy="405" r="4.3" fill="#fff" stroke="#7a7a7a" stroke-width="1.1"/><path d="M1022.5,377 v36.5 h40" fill="none" stroke="#7a7a7a" stroke-width="1.2"/><defs><radialGradient id="bg" cx="35%" cy="35%" r="65%"><stop offset="0" stop-color="#eeeeee"/><stop offset="1" stop-color="#8a8a8a"/></radialGradient></defs><circle cx="1039.5" cy="386" r="6.3" fill="url(#bg)"/><circle cx="1051.5" cy="394" r="4.3" fill="url(#bg)"/><circle cx="1036.5" cy="400" r="6.3" fill="url(#bg)"/><circle cx="1049.5" cy="404.5" r="5" fill="url(#bg)"/><rect x="937" y="431" width="210" height="1" fill="#e1e1e1"/><path d="M941.5,438 v14.5 h19" fill="none" stroke="#888" stroke-width="0.9"/><path d="M944,448 h2 M945,447 v2" stroke="#999" stroke-width="0.7"/><path d="M948,444 h2 M949,443 v2" stroke="#999" stroke-width="0.7"/><path d="M952,441 h2 M953,440 v2" stroke="#999" stroke-width="0.7"/><path d="M946,451 h2 M947,450 v2" stroke="#999" stroke-width="0.7"/><path d="M951,447 h2 M952,446 v2" stroke="#999" stroke-width="0.7"/><path d="M955,445 h2 M956,444 v2" stroke="#999" stroke-width="0.7"/><path d="M953,450 h2 M954,449 v2" stroke="#999" stroke-width="0.7"/><path d="M957,441 h2 M958,440 v2" stroke="#999" stroke-width="0.7"/><path d="M949,438 h2 M950,437 v2" stroke="#999" stroke-width="0.7"/><text x="974" y="454" font-size="14.2" fill="#5a5a5a">More Scatter Charts...</text><rect x="974" y="456" width="13" height="1" fill="#5a5a5a"/></svg>
<svg class="a" style="left:0;top:0" width="1920" height="1030" font-family=""Liberation Sans", sans-serif"><path d="M267.5,291 L362,343" stroke="#c00000" stroke-width="3.4"/><polygon points="375.5,350 358,349.5 366.5,337" fill="#c00000"/><path d="M254.5,277.5 V306 M255,279 L247.5,285.5" stroke="#c00000" stroke-width="3.6" fill="none"/><path d="M1323.5,218.5 L1150,225" stroke="#c00000" stroke-width="3"/><polygon points="1137,225.3 1152,218 1152,232" fill="#c00000"/><text x="1327.5" y="227" font-size="39" fill="#c00000" stroke="#c00000" stroke-width="1.3">2</text></svg>
</body></html>
